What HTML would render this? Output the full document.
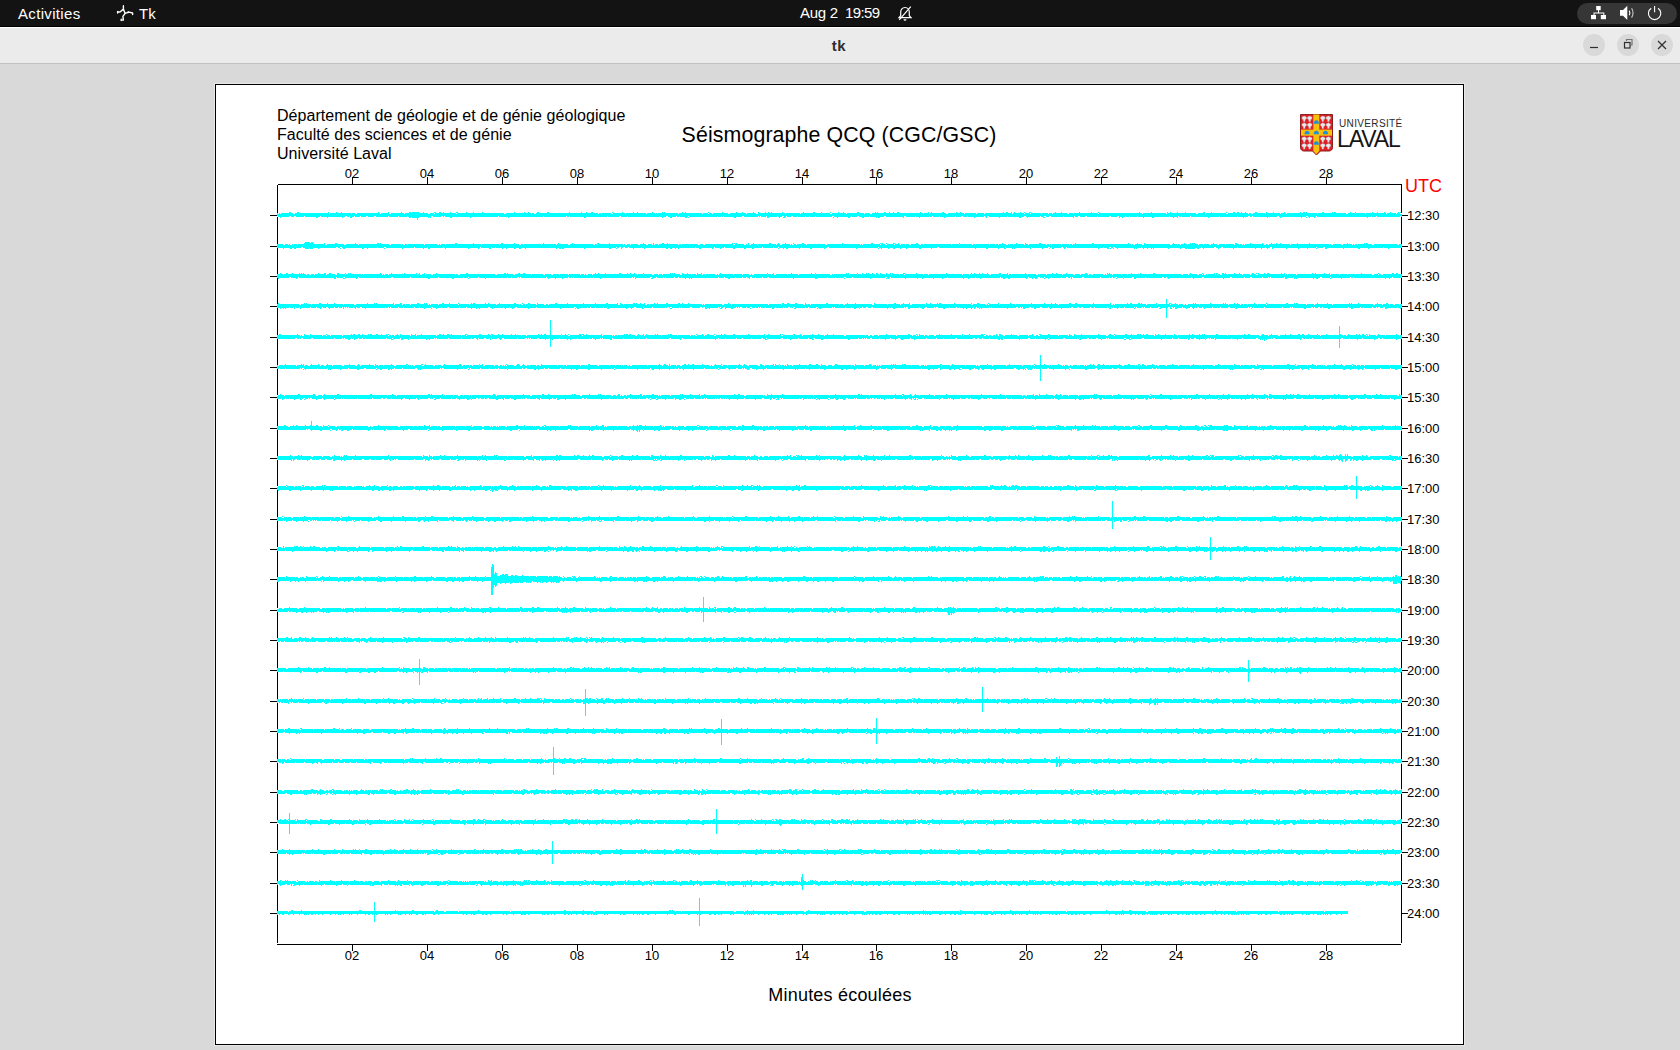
<!DOCTYPE html>
<html><head><meta charset="utf-8">
<style>
html,body{margin:0;padding:0;}
body{width:1680px;height:1050px;overflow:hidden;background:#d9d9d9;position:relative;font-family:"Liberation Sans",sans-serif;}
.abs{position:absolute;}
#topbar{position:absolute;left:0;top:0;width:1680px;height:26px;background:#131313;border-bottom:1px solid #000;}
#topbar .w{position:absolute;color:#fff;font-size:15px;white-space:nowrap;}
#hl{position:absolute;left:0;top:27px;width:1680px;height:1px;background:#fff;}
#titlebar{position:absolute;left:0;top:28px;width:1680px;height:35px;background:#ebebeb;border-bottom:1px solid #c0c0c0;}
.btn{position:absolute;top:34px;width:22px;height:22px;border-radius:50%;background:#d9d9d9;}
#canvas{position:absolute;left:214px;top:83px;width:1249px;height:961px;border:1px solid #e8e8e8;}
#cin{position:absolute;left:0;top:0;width:1247px;height:959px;border:1px solid #000;background:#fff;}
.t13{position:absolute;width:40px;text-align:center;font-size:13px;line-height:15px;color:#000;}
.r13{position:absolute;font-size:13px;line-height:15px;color:#000;}
.hdr{position:absolute;left:277px;font-size:16px;line-height:19px;color:#000;white-space:nowrap;letter-spacing:0.05px;}
svg{position:absolute;left:0;top:0;}
</style></head><body>
<div id="topbar">
  <div class="w" style="left:18px;top:5px;letter-spacing:0.33px;">Activities</div>
  <svg style="left:116px;top:5px" width="18" height="18" viewBox="0 0 18 18">
    <g stroke="#fff" stroke-width="1.4" fill="none" stroke-linejoin="round" stroke-linecap="round">
      <path d="M7.4 0.8V4.1L4.3 6.7 1.6 7.2M1.6 6.4v1.6M7.4 4.1L9.1 8.4 13.1 7.1 16.6 8v1.6M9.1 8.4L6.9 11.3 7.4 15.1H5.2M5.2 14.2v1.4M12.2 6.6v1"/>
    </g>
  </svg>
  <div class="w" style="left:139px;top:5px;">Tk</div>
  <div class="w" style="left:800px;top:4px;letter-spacing:-0.3px;">Aug 2</div><div class="w" style="left:845px;top:4px;letter-spacing:-0.6px;">19:59</div>
  <svg style="left:897px;top:5px" width="16" height="17" viewBox="0 0 16 17">
    <path d="M8 2.5c-2.6 0-4.3 2-4.3 4.6v3.6L2 12.6h12l-1.7-1.9V7.1C12.3 4.5 10.6 2.5 8 2.5z" fill="none" stroke="#fff" stroke-width="1.2"/>
    <path d="M6.5 14.2a1.5 1.5 0 0 0 3 0z" fill="#fff"/>
    <path d="M2.2 14.8L13.8 1.6" stroke="#fff" stroke-width="1.2"/>
  </svg>
  <div style="position:absolute;left:1577px;top:3px;width:100px;height:21px;border-radius:11px;background:#363636;"></div>
  <svg style="left:1589px;top:5px" width="80" height="18" viewBox="0 0 80 18">
    <g fill="#fff">
      <rect x="7.2" y="1" width="4.5" height="4.2"/>
      <rect x="2" y="10" width="5" height="4.2"/>
      <rect x="11.8" y="10" width="5.2" height="4.2"/>
      <path d="M9 5h1v2.6h5.3v2.4h-1v-1.4H5.5v1.4h-1V7.6H9z"/>
      <path d="M31 5h3l4.3-4.2v14.2L34 10.8h-3z"/>
    </g>
    <g fill="none" stroke="#fff" stroke-width="1.1">
      <path d="M40.2 5.6q1.4 2.3 0 4.6"/>
      <path d="M42.6 3.2q2.9 4.7 0 9.4" stroke-opacity="0.75"/>
      <path d="M65.6 1v6.2"/>
      <path d="M62.2 3.2a6.2 6.2 0 1 0 6.8 0"/>
    </g>
  </svg>
</div>
<div id="hl"></div>
<div id="titlebar">
  <div style="position:absolute;left:-1px;width:1680px;top:9px;text-align:center;font-size:15px;font-weight:bold;color:#2e2e2e;letter-spacing:0.6px;">tk</div>
</div>
<div class="btn" style="left:1583px;"></div>
<div class="btn" style="left:1617px;"></div>
<div class="btn" style="left:1651px;"></div>
<svg style="left:1580px;top:36px" width="100" height="20" viewBox="0 0 100 20">
  <g stroke="#2e2e2e" stroke-width="1.2" fill="none">
    <path d="M10 11.5h8"/>
    <rect x="44.5" y="6.5" width="5.5" height="5.5"/>
    <path d="M46.5 5V3.5h5.5V9h-1.5" stroke-opacity="0.6"/>
    <path d="M78 5l8 8M86 5l-8 8"/>
  </g>
</svg>
<div id="canvas"><div id="cin"></div></div>
<svg width="1680" height="1050" shape-rendering="crispEdges">
<path d="M277.5 184.5H1401.5M277.5 184.5V942.5M1401.5 184.5V942.5M277 944.5H1401" stroke="#000" stroke-width="1" fill="none"/><path d="M352.5 177V184M352.5 945V951M427.5 177V184M427.5 945V951M502.5 177V184M502.5 945V951M577.5 177V184M577.5 945V951M652.5 177V184M652.5 945V951M727.5 177V184M727.5 945V951M802.5 177V184M802.5 945V951M876.5 177V184M876.5 945V951M951.5 177V184M951.5 945V951M1026.5 177V184M1026.5 945V951M1101.5 177V184M1101.5 945V951M1176.5 177V184M1176.5 945V951M1251.5 177V184M1251.5 945V951M1326.5 177V184M1326.5 945V951M270 215.5H277M1402 215.5H1408M270 246.5H277M1402 246.5H1408M270 276.5H277M1402 276.5H1408M270 306.5H277M1402 306.5H1408M270 337.5H277M1402 337.5H1408M270 367.5H277M1402 367.5H1408M270 397.5H277M1402 397.5H1408M270 428.5H277M1402 428.5H1408M270 458.5H277M1402 458.5H1408M270 488.5H277M1402 488.5H1408M270 519.5H277M1402 519.5H1408M270 549.5H277M1402 549.5H1408M270 579.5H277M1402 579.5H1408M270 610.5H277M1402 610.5H1408M270 640.5H277M1402 640.5H1408M270 670.5H277M1402 670.5H1408M270 701.5H277M1402 701.5H1408M270 731.5H277M1402 731.5H1408M270 761.5H277M1402 761.5H1408M270 792.5H277M1402 792.5H1408M270 822.5H277M1402 822.5H1408M270 852.5H277M1402 852.5H1408M270 883.5H277M1402 883.5H1408M270 913.5H277M1402 913.5H1408" stroke="#000" stroke-width="1" fill="none"/>
<path fill="#0ff" d="M277 213h1125v4h-1125zM277 244h1125v4h-1125zM277 274h1125v4h-1125zM277 304h1125v4h-1125zM277 335h1125v4h-1125zM277 365h1125v4h-1125zM277 395h1125v4h-1125zM277 426h1125v4h-1125zM277 456h1125v4h-1125zM277 486h1125v4h-1125zM277 517h1125v4h-1125zM277 547h1125v4h-1125zM277 577h1125v4h-1125zM277 608h1125v4h-1125zM277 638h1125v4h-1125zM277 668h1125v4h-1125zM277 699h1125v4h-1125zM277 729h1125v4h-1125zM277 759h1125v4h-1125zM277 790h1125v4h-1125zM277 820h1125v4h-1125zM277 850h1125v4h-1125zM277 881h1125v4h-1125zM277 911h1071v3h-1071z"/><path stroke="#fff" fill="none" d="M278 213.5h1m1 0h1m12 0h2m34 0h1m21 0h1m3 0h2m23 0h1m8 0h2m13 0h1m4 0h2m17 0h2m4 0h1m21 0h1m47 0h2m25 0h1m2 0h2m62 0h1m2 0h1m9 0h2m12 0h1m20 0h1m8 0h1m1 0h1m20 0h1m23 0h1m5 0h1m3 0h1m15 0h2m16 0h1m9 0h2m27 0h1m14 0h1m20 0h1m8 0h2m14 0h1m17 0h1m5 0h2m51 0h1m5 0h1m16 0h2m16 0h1m11 0h1m7 0h1m27 0h1m11 0h1m5 0h1m10 0h1m6 0h1m3 0h1m14 0h2m4 0h1m24 0h1m43 0h1m23 0h1m29 0h2m7 0h1m20 0h2m20 0h1m2 0h2m12 0h1m14 0h1m5 0h1m30 0h1m28 0h2m7 0h1m9 0h1m20 0h1m9 0h1m3 0h2M277 216.5h1m11 0h2m3 0h2m8 0h1m15 0h1m24 0h2m2 0h1m4 0h1m5 0h1m5 0h2m6 0h2m12 0h1m9 0h1m8 0h2m2 0h1m3 0h1m15 0h2m8 0h2m1 0h1m53 0h1m44 0h1m22 0h1m2 0h1m37 0h1m11 0h2m6 0h1m31 0h1m6 0h2m8 0h1m2 0h1m8 0h1m28 0h1m3 0h1m1 0h1m18 0h2m14 0h1m1 0h1m5 0h1m10 0h1m4 0h2m2 0h1m4 0h2m4 0h1m7 0h1m3 0h1m5 0h1m16 0h2m17 0h1m5 0h2m10 0h1m14 0h2m18 0h2m9 0h1m13 0h1m2 0h1m6 0h1m15 0h1m5 0h2m4 0h1m16 0h1m2 0h2m18 0h1m16 0h2m14 0h1m3 0h2m3 0h2m12 0h1m10 0h1m3 0h2m5 0h2m10 0h1m11 0h2m6 0h2m6 0h1m3 0h1m7 0h1m31 0h1m8 0h1m2 0h1m8 0h1m28 0h1m17 0h1m10 0h2m2 0h1m24 0h2m27 0h2m8 0h1m54 0h1m4 0h1m23 0h1M283 244.5h2m3 0h1m1 0h2m1 0h1m3 0h1m9 0h1m2 0h1m14 0h2m17 0h2m12 0h1m30 0h2m10 0h1m1 0h2m2 0h1m16 0h1m12 0h2m1 0h1m4 0h1m35 0h1m17 0h1m19 0h2m2 0h1m17 0h1m14 0h1m11 0h2m23 0h2m2 0h1m25 0h1m1 0h2m3 0h1m7 0h2m6 0h2m4 0h1m1 0h1m3 0h1m19 0h1m2 0h1m16 0h2m3 0h2m28 0h2m9 0h2m1 0h1m1 0h2m6 0h1m18 0h1m3 0h2m8 0h1m1 0h2m2 0h1m9 0h1m18 0h2m33 0h1m1 0h1m17 0h1m4 0h2m7 0h1m5 0h1m4 0h1m3 0h2m8 0h2m2 0h1m27 0h1m7 0h1m12 0h1m2 0h1m13 0h1m5 0h1m2 0h1m7 0h2m1 0h1m3 0h1m10 0h1m3 0h1m17 0h1m2 0h1m1 0h1m9 0h1m7 0h1m2 0h1m58 0h1m1 0h2m7 0h2m26 0h2m5 0h1m2 0h1m6 0h1m10 0h1m4 0h1m5 0h2m6 0h2m6 0h1m8 0h1m4 0h1m2 0h1m1 0h1m19 0h2m2 0h1m21 0h1m38 0h1m1 0h2m8 0h2m9 0h1m1 0h1m2 0h1m14 0h2m23 0h2M301 247.5h2m33 0h2m2 0h2m35 0h1m6 0h2m28 0h1m12 0h1m15 0h1m36 0h1m10 0h1m3 0h1m120 0h1m2 0h2m2 0h2m3 0h1m12 0h1m53 0h1m18 0h1m9 0h1m37 0h1m10 0h1m4 0h1m22 0h1m25 0h2m49 0h1m58 0h2m66 0h1m25 0h1m16 0h2m1 0h1m9 0h2m3 0h1m36 0h1m5 0h2m2 0h2m26 0h1m59 0h1m12 0h2m5 0h2m14 0h1m27 0h1m4 0h2m44 0h1m6 0h2m58 0h1M283 274.5h1m22 0h1m2 0h2m3 0h1m11 0h1m8 0h2m8 0h1m15 0h1m1 0h1m18 0h1m1 0h1m3 0h1m28 0h1m2 0h2m3 0h1m5 0h2m22 0h1m2 0h2m35 0h2m16 0h2m16 0h1m11 0h2m6 0h2m6 0h1m8 0h1m11 0h1m3 0h1m1 0h2m4 0h1m44 0h1m5 0h1m8 0h2m4 0h1m3 0h1m17 0h2m9 0h1m4 0h1m5 0h1m2 0h1m9 0h2m1 0h1m14 0h1m8 0h1m6 0h2m1 0h2m13 0h1m3 0h1m2 0h2m11 0h1m10 0h1m16 0h1m14 0h2m1 0h1m15 0h1m7 0h1m3 0h1m13 0h1m3 0h1m5 0h1m5 0h1m7 0h1m4 0h1m18 0h1m4 0h1m33 0h1m6 0h1m1 0h1m17 0h2m10 0h1m6 0h1m2 0h1m15 0h1m8 0h2m1 0h1m6 0h1m15 0h1m10 0h2m5 0h1m7 0h1m2 0h2m10 0h2m1 0h1m5 0h1m8 0h1m5 0h1m53 0h2m5 0h1m8 0h2m3 0h1m1 0h2m1 0h1m7 0h1m1 0h1m2 0h2m5 0h1m14 0h1m7 0h1m5 0h2m27 0h1m1 0h1m8 0h1m33 0h1m8 0h1m7 0h1m24 0h2m4 0h1m2 0h2M289 277.5h2m7 0h1m37 0h1m6 0h2m13 0h1m32 0h2m17 0h1m27 0h1m24 0h1m4 0h1m9 0h1m6 0h1m21 0h1m3 0h1m5 0h2m1 0h1m25 0h1m21 0h1m2 0h1m1 0h1m19 0h1m38 0h1m1 0h1m15 0h2m4 0h1m6 0h1m1 0h1m8 0h1m3 0h1m2 0h1m36 0h1m5 0h1m10 0h1m6 0h1m3 0h1m3 0h2m3 0h1m6 0h1m4 0h2m58 0h1m7 0h1m8 0h2m6 0h1m32 0h2m3 0h1m56 0h1m27 0h1m24 0h1m27 0h1m9 0h2m1 0h1m2 0h1m6 0h1m9 0h1m4 0h2m2 0h1m1 0h1m9 0h2m16 0h1m8 0h1m2 0h1m2 0h2m6 0h1m8 0h2m11 0h1m16 0h2m2 0h1m24 0h1m10 0h2m26 0h2m12 0h1m5 0h2m10 0h1m5 0h1m1 0h1m13 0h1m8 0h1m26 0h2m8 0h1m19 0h1m2 0h1m38 0h1M299 304.5h2m10 0h1m31 0h1m10 0h2m38 0h1m7 0h1m2 0h1m4 0h1m17 0h1m1 0h1m7 0h1m19 0h1m10 0h1m26 0h1m22 0h1m1 0h2m2 0h1m10 0h1m7 0h2m2 0h1m69 0h2m3 0h1m21 0h2m2 0h1m52 0h1m1 0h1m17 0h2m7 0h1m36 0h1m12 0h1m21 0h2m2 0h1m2 0h1m28 0h1m3 0h2m27 0h2m13 0h1m12 0h1m9 0h2m13 0h1m45 0h2m12 0h2m1 0h1m10 0h1m15 0h1m42 0h1m32 0h1m19 0h2m1 0h1m31 0h1m10 0h1m12 0h1m7 0h1m4 0h2m1 0h2m11 0h1m28 0h1m11 0h1m2 0h1m3 0h1m9 0h1m8 0h1m39 0h1m7 0h1m17 0h1m40 0h2m7 0h1m6 0h1m3 0h2m4 0h1M289 307.5h1m3 0h1m1 0h1m3 0h1m10 0h1m5 0h1m5 0h1m3 0h2m6 0h1m3 0h1m3 0h1m1 0h1m1 0h1m1 0h1m4 0h1m2 0h1m3 0h2m23 0h1m2 0h1m1 0h1m7 0h1m4 0h1m10 0h1m4 0h1m11 0h2m8 0h1m5 0h2m10 0h1m6 0h1m21 0h2m13 0h1m5 0h1m5 0h2m19 0h1m37 0h2m11 0h1m2 0h1m4 0h1m7 0h1m3 0h1m21 0h1m4 0h2m7 0h1m8 0h1m12 0h1m1 0h2m1 0h2m7 0h1m1 0h1m8 0h2m8 0h2m1 0h2m13 0h1m1 0h1m2 0h2m11 0h1m1 0h1m1 0h2m4 0h1m3 0h2m3 0h1m2 0h1m1 0h1m4 0h1m5 0h1m3 0h1m7 0h1m1 0h1m2 0h2m1 0h1m1 0h2m10 0h1m2 0h1m7 0h2m14 0h1m1 0h1m10 0h1m5 0h1m7 0h1m2 0h1m3 0h2m3 0h2m16 0h1m1 0h1m12 0h1m1 0h2m11 0h1m5 0h2m7 0h1m1 0h2m11 0h1m6 0h1m2 0h1m13 0h1m2 0h1m2 0h1m9 0h1m1 0h1m24 0h2m2 0h1m1 0h1m6 0h2m2 0h1m6 0h2m6 0h1m20 0h1m1 0h2m4 0h2m2 0h2m7 0h1m3 0h1m12 0h1m1 0h1m1 0h1m1 0h1m5 0h1m4 0h1m9 0h1m1 0h1m5 0h1m1 0h1m5 0h1m7 0h2m8 0h2m1 0h2m1 0h1m7 0h1m7 0h2m3 0h1m1 0h2m3 0h1m9 0h1m4 0h1m2 0h1m7 0h2m5 0h1m12 0h1m1 0h2m1 0h1m10 0h1m17 0h1m7 0h1m1 0h1m18 0h2m1 0h1m3 0h2m2 0h1m25 0h1m11 0h1m2 0h1m8 0h1m3 0h1m1 0h2m3 0h2m12 0h1M300 335.5h1m1 0h2m5 0h1m12 0h1m3 0h1m3 0h1m11 0h1m45 0h1m2 0h1m2 0h1m4 0h1m10 0h1m5 0h1m19 0h1m24 0h1m4 0h1m24 0h1m29 0h1m4 0h1m34 0h1m6 0h2m12 0h1m19 0h1m9 0h1m1 0h1m2 0h1m17 0h2m4 0h1m2 0h1m16 0h1m15 0h1m12 0h1m2 0h1m1 0h2m7 0h1m9 0h2m49 0h1m15 0h2m10 0h1m8 0h1m21 0h1m19 0h2m19 0h1m2 0h2m2 0h2m4 0h1m17 0h1m15 0h1m3 0h1m1 0h1m5 0h1m2 0h2m5 0h2m25 0h1m1 0h1m5 0h1m14 0h2m2 0h1m2 0h2m2 0h1m2 0h1m4 0h2m12 0h2m9 0h1m5 0h2m2 0h2m18 0h1m9 0h1m3 0h2m32 0h2m6 0h1m39 0h1m18 0h1m3 0h1m49 0h1m31 0h2m7 0h1m9 0h2m25 0h1m11 0h1m2 0h1m22 0h1m2 0h1m14 0h1m4 0h1m1 0h1m7 0h1m8 0h1m13 0h1M295 338.5h2m2 0h1m1 0h2m8 0h2m21 0h1m7 0h1m1 0h1m6 0h1m1 0h1m4 0h1m3 0h1m2 0h1m20 0h1m5 0h1m7 0h1m8 0h1m24 0h1m1 0h1m11 0h1m12 0h1m9 0h1m2 0h2m2 0h1m5 0h2m3 0h1m1 0h1m5 0h2m3 0h2m13 0h1m7 0h2m1 0h1m1 0h1m6 0h2m10 0h1m9 0h1m17 0h1m11 0h1m2 0h1m7 0h1m1 0h1m9 0h1m10 0h1m9 0h1m5 0h1m6 0h1m22 0h2m11 0h1m35 0h1m6 0h1m10 0h1m5 0h1m8 0h1m9 0h2m3 0h1m14 0h2m4 0h1m10 0h1m9 0h1m4 0h2m43 0h1m3 0h1m1 0h1m1 0h1m3 0h2m7 0h1m10 0h1m7 0h2m10 0h1m15 0h1m9 0h1m6 0h1m11 0h2m16 0h2m2 0h2m3 0h1m6 0h1m13 0h1m24 0h2m5 0h1m12 0h1m14 0h2m12 0h1m1 0h1m7 0h2m2 0h1m4 0h2m3 0h1m4 0h1m1 0h1m15 0h2m4 0h1m11 0h2m21 0h1m6 0h1m5 0h1m8 0h1m2 0h1m3 0h2m9 0h1m1 0h2m1 0h1m3 0h1m16 0h1m10 0h1m13 0h2m13 0h1m1 0h2m27 0h1m2 0h1m3 0h1m2 0h1m8 0h1m19 0h2m6 0h1m12 0h1m15 0h2m2 0h1m10 0h1M278 365.5h1m4 0h1m12 0h1m7 0h1m3 0h2m10 0h1m3 0h2m6 0h1m9 0h2m11 0h2m3 0h1m13 0h1m3 0h1m4 0h1m10 0h2m11 0h1m1 0h1m1 0h1m1 0h2m7 0h2m9 0h2m2 0h1m3 0h2m19 0h1m2 0h1m3 0h1m2 0h1m6 0h1m3 0h2m9 0h1m3 0h2m2 0h1m1 0h1m1 0h1m7 0h2m4 0h2m3 0h2m2 0h1m6 0h1m2 0h2m16 0h1m5 0h1m2 0h1m13 0h1m4 0h1m1 0h1m9 0h2m10 0h1m5 0h1m5 0h1m1 0h1m3 0h2m1 0h2m15 0h1m9 0h1m4 0h1m5 0h1m1 0h1m5 0h1m3 0h2m27 0h2m1 0h2m7 0h2m4 0h1m9 0h1m4 0h1m4 0h2m9 0h2m4 0h1m4 0h1m4 0h1m4 0h1m1 0h1m2 0h1m1 0h1m2 0h1m2 0h1m14 0h1m12 0h1m5 0h2m4 0h2m17 0h1m2 0h1m9 0h1m7 0h1m3 0h1m1 0h1m1 0h1m30 0h1m7 0h2m3 0h1m1 0h1m14 0h1m8 0h1m14 0h1m10 0h1m1 0h2m7 0h1m4 0h1m13 0h1m15 0h1m8 0h1m2 0h1m14 0h1m1 0h1m10 0h1m1 0h1m3 0h2m1 0h2m4 0h1m1 0h1m4 0h1m1 0h1m8 0h2m8 0h1m3 0h1m12 0h2m11 0h1m1 0h1m1 0h1m1 0h1m4 0h1m8 0h1m1 0h2m6 0h2m11 0h1m11 0h1m8 0h1m1 0h1m11 0h2m6 0h1m11 0h1m6 0h1m2 0h1m5 0h1m5 0h2m15 0h1m22 0h2m10 0h1m8 0h1m4 0h1m1 0h1m1 0h2m4 0h1m11 0h2m7 0h1m3 0h1m3 0h1m3 0h1m24 0h1M279 368.5h1m5 0h1m14 0h1m1 0h2m13 0h1m9 0h1m20 0h1m15 0h2m10 0h1m10 0h1m6 0h1m7 0h1m12 0h2m23 0h1m1 0h2m19 0h1m3 0h2m1 0h1m9 0h1m8 0h1m5 0h1m2 0h1m8 0h1m14 0h1m2 0h2m17 0h1m3 0h1m11 0h1m4 0h1m45 0h1m2 0h1m12 0h1m22 0h1m24 0h1m2 0h1m2 0h1m22 0h1m10 0h1m2 0h1m7 0h2m8 0h2m4 0h1m1 0h1m5 0h2m14 0h1m38 0h1m13 0h1m37 0h1m21 0h2m5 0h1m6 0h2m26 0h1m16 0h2m20 0h2m12 0h1m5 0h1m33 0h2m9 0h2m6 0h1m1 0h1m5 0h1m5 0h2m20 0h2m24 0h2m4 0h1m10 0h1m4 0h2m33 0h1m3 0h1m2 0h1m25 0h1m21 0h1m19 0h1m24 0h2m5 0h2m39 0h1m8 0h2m53 0h1m15 0h1m9 0h1M277 395.5h1m6 0h1m31 0h2m4 0h1m64 0h1m8 0h1m46 0h1m1 0h1m7 0h1m4 0h2m3 0h1m5 0h1m1 0h1m19 0h1m4 0h1m16 0h1m16 0h2m9 0h1m38 0h2m23 0h1m5 0h2m3 0h1m3 0h1m1 0h2m2 0h1m15 0h1m2 0h1m12 0h1m1 0h1m9 0h1m29 0h1m43 0h2m17 0h1m1 0h2m46 0h1m15 0h1m39 0h1m32 0h1m9 0h2m5 0h1m14 0h1m70 0h1m16 0h1m2 0h2m7 0h1m3 0h1m14 0h2m7 0h1m5 0h1m9 0h1m26 0h1m6 0h1m36 0h2m26 0h1m9 0h1m27 0h1m52 0h1m38 0h1m40 0h1m22 0h1m15 0h1m9 0h2M281 398.5h1m3 0h1m3 0h1m9 0h1m1 0h1m1 0h2m3 0h1m1 0h2m10 0h1m11 0h1m6 0h1m1 0h1m13 0h1m14 0h1m8 0h2m2 0h2m4 0h1m11 0h2m11 0h1m2 0h1m8 0h2m1 0h1m1 0h2m5 0h1m10 0h1m4 0h1m8 0h1m5 0h1m4 0h2m1 0h2m3 0h1m2 0h2m12 0h1m2 0h1m5 0h1m10 0h1m1 0h1m1 0h2m2 0h1m6 0h1m3 0h1m11 0h1m3 0h1m25 0h2m2 0h1m22 0h1m7 0h1m6 0h1m3 0h2m1 0h1m5 0h1m1 0h1m6 0h2m1 0h2m5 0h1m4 0h1m5 0h1m6 0h1m9 0h2m3 0h1m4 0h1m6 0h1m2 0h1m1 0h1m8 0h1m1 0h1m2 0h1m2 0h1m1 0h1m1 0h1m16 0h1m17 0h2m5 0h1m2 0h1m2 0h2m2 0h2m1 0h1m16 0h1m2 0h1m4 0h1m3 0h1m1 0h1m2 0h1m11 0h2m4 0h1m4 0h1m6 0h2m1 0h1m4 0h1m1 0h1m9 0h1m3 0h1m1 0h2m1 0h2m3 0h1m4 0h1m1 0h1m1 0h1m3 0h2m8 0h1m4 0h1m3 0h1m1 0h1m1 0h2m4 0h2m1 0h1m13 0h1m1 0h2m5 0h1m1 0h1m9 0h1m5 0h2m2 0h1m10 0h2m4 0h2m1 0h2m5 0h1m8 0h1m4 0h1m12 0h1m2 0h1m3 0h1m19 0h1m2 0h1m22 0h1m12 0h1m1 0h1m4 0h2m3 0h1m10 0h1m8 0h1m2 0h1m10 0h1m7 0h1m3 0h1m3 0h1m1 0h1m10 0h1m1 0h1m14 0h2m1 0h1m2 0h1m1 0h1m6 0h1m2 0h2m3 0h1m3 0h1m1 0h1m6 0h1m2 0h1m8 0h1m4 0h1m3 0h1m10 0h1m3 0h2m1 0h2m6 0h2m1 0h1m3 0h1m14 0h1m6 0h2m5 0h2m11 0h1m6 0h1m8 0h1m2 0h1m3 0h1m1 0h1m8 0h2m6 0h2m1 0h1m5 0h2m5 0h2m16 0h1M288 426.5h2m29 0h1m2 0h1m5 0h1m6 0h2m2 0h1m13 0h1m14 0h2m1 0h2m25 0h2m13 0h1m3 0h1m5 0h1m6 0h1m6 0h1m2 0h2m13 0h1m9 0h1m5 0h2m9 0h2m6 0h1m1 0h1m3 0h1m1 0h1m6 0h2m18 0h1m7 0h1m1 0h1m4 0h2m2 0h1m4 0h1m9 0h1m18 0h1m11 0h1m6 0h1m1 0h1m4 0h1m1 0h1m10 0h1m9 0h2m2 0h1m7 0h1m13 0h1m8 0h1m1 0h1m6 0h1m2 0h1m1 0h2m6 0h2m11 0h2m4 0h1m4 0h1m9 0h1m7 0h1m9 0h2m3 0h1m15 0h1m1 0h1m2 0h1m2 0h1m2 0h1m5 0h1m21 0h1m11 0h1m10 0h1m6 0h1m3 0h1m24 0h2m20 0h1m3 0h1m28 0h2m10 0h2m7 0h2m5 0h2m5 0h1m5 0h2m29 0h2m9 0h1m7 0h1m4 0h1m1 0h2m7 0h1m14 0h1m1 0h2m9 0h2m9 0h1m7 0h2m7 0h1m26 0h1m7 0h1m15 0h1m5 0h2m6 0h1m3 0h1m8 0h1m26 0h1m6 0h1m13 0h2m2 0h2m2 0h2m23 0h2m14 0h1m8 0h2m1 0h1m2 0h1m1 0h2m10 0h1m1 0h1m1 0h1m3 0h1m7 0h1m14 0h1m12 0h1m5 0h1m4 0h1m1 0h2m11 0h2m1 0h1m6 0h2m8 0h1m23 0h1m9 0h1M306 429.5h1m1 0h2m20 0h2m6 0h1m2 0h1m10 0h1m18 0h1m1 0h1m12 0h1m14 0h1m6 0h2m17 0h2m24 0h1m28 0h2m7 0h1m13 0h1m12 0h2m17 0h2m29 0h2m7 0h1m17 0h1m3 0h1m30 0h1m10 0h1m1 0h1m26 0h2m11 0h1m13 0h1m1 0h1m6 0h1m2 0h1m11 0h1m8 0h2m7 0h1m13 0h1m5 0h1m13 0h1m2 0h1m21 0h1m5 0h1m4 0h1m37 0h1m8 0h1m15 0h2m8 0h1m16 0h1m6 0h1m23 0h1m11 0h1m12 0h1m21 0h1m15 0h1m17 0h2m23 0h1m16 0h1m18 0h1m1 0h1m1 0h1m10 0h1m33 0h1m10 0h1m1 0h1m6 0h1m8 0h1m14 0h2m34 0h1m13 0h1m22 0h2m31 0h1m2 0h2m5 0h1m9 0h1m38 0h1m32 0h1m4 0h2m3 0h1m3 0h1m6 0h1M293 456.5h1m17 0h2m9 0h1m7 0h2m1 0h1m6 0h1m1 0h1m46 0h1m32 0h1m5 0h1m3 0h1m20 0h1m23 0h1m5 0h1m13 0h1m9 0h1m16 0h2m6 0h1m54 0h1m14 0h2m6 0h1m7 0h1m31 0h1m8 0h1m9 0h1m34 0h1m5 0h2m2 0h1m31 0h1m3 0h1m7 0h2m2 0h2m4 0h1m12 0h1m9 0h2m3 0h1m22 0h1m21 0h2m19 0h2m15 0h1m5 0h1m27 0h1m7 0h1m19 0h1m2 0h2m1 0h2m1 0h1m5 0h2m11 0h2m20 0h2m14 0h1m9 0h1m7 0h1m29 0h1m2 0h1m4 0h1m23 0h1m3 0h1m6 0h1m18 0h2m26 0h1m4 0h2m26 0h1m22 0h1m5 0h1m2 0h1m3 0h1m24 0h2m3 0h1m27 0h1m20 0h1m5 0h1m10 0h1m6 0h1m2 0h2m29 0h2m8 0h1m6 0h2m19 0h1m8 0h1M277 459.5h1m14 0h1m2 0h2m4 0h1m8 0h2m3 0h1m3 0h2m4 0h2m5 0h1m19 0h1m9 0h2m5 0h2m4 0h1m6 0h2m4 0h1m2 0h1m2 0h1m1 0h2m16 0h1m8 0h2m5 0h1m1 0h1m6 0h2m9 0h1m5 0h2m3 0h1m2 0h1m14 0h1m1 0h1m5 0h1m17 0h1m7 0h1m12 0h2m6 0h2m4 0h1m12 0h1m24 0h2m11 0h1m12 0h1m3 0h1m9 0h1m22 0h1m12 0h1m1 0h1m3 0h1m20 0h1m1 0h1m1 0h1m7 0h1m2 0h2m5 0h1m2 0h1m2 0h2m9 0h1m27 0h1m9 0h1m20 0h2m1 0h1m5 0h2m16 0h2m7 0h1m5 0h1m1 0h1m1 0h2m1 0h2m2 0h1m2 0h2m12 0h2m2 0h1m5 0h1m16 0h1m4 0h1m9 0h1m3 0h2m14 0h1m1 0h2m15 0h2m9 0h2m3 0h1m1 0h1m1 0h2m23 0h1m3 0h2m8 0h2m2 0h2m3 0h1m7 0h2m1 0h2m4 0h2m8 0h1m29 0h1m12 0h1m3 0h2m12 0h1m9 0h1m13 0h2m1 0h1m3 0h1m21 0h1m11 0h2m1 0h2m2 0h1m2 0h1m1 0h2m1 0h1m2 0h1m1 0h1m3 0h1m8 0h1m17 0h1m8 0h1m11 0h2m9 0h1m8 0h1m6 0h1m4 0h2m1 0h1m2 0h1m5 0h1m1 0h2m4 0h2m1 0h2m7 0h2m1 0h2m1 0h1m4 0h2m1 0h1m3 0h1m5 0h1m17 0h1m6 0h2m1 0h1m3 0h2m3 0h2m2 0h1m6 0h1m11 0h2m7 0h2m3 0h1m8 0h1M277 486.5h1m8 0h1m7 0h1m2 0h1m3 0h2m1 0h1m5 0h1m3 0h2m7 0h1m1 0h1m12 0h1m7 0h1m5 0h2m1 0h1m6 0h1m1 0h2m5 0h1m3 0h1m3 0h2m6 0h2m2 0h2m5 0h2m2 0h1m2 0h1m8 0h1m4 0h1m21 0h1m8 0h2m1 0h1m2 0h1m3 0h1m5 0h1m1 0h2m12 0h1m8 0h1m1 0h1m3 0h1m9 0h2m7 0h1m2 0h1m11 0h1m8 0h2m4 0h1m1 0h1m17 0h1m11 0h1m8 0h1m2 0h1m7 0h1m15 0h1m1 0h1m14 0h1m5 0h1m3 0h2m8 0h2m8 0h1m11 0h1m19 0h2m8 0h1m3 0h1m8 0h2m4 0h1m14 0h1m14 0h1m8 0h2m28 0h1m8 0h1m40 0h1m2 0h1m5 0h1m6 0h1m11 0h1m16 0h1m9 0h1m4 0h1m11 0h1m2 0h1m1 0h1m11 0h1m7 0h1m4 0h1m5 0h1m14 0h1m1 0h1m3 0h1m4 0h1m12 0h2m9 0h1m7 0h2m1 0h1m9 0h1m5 0h1m12 0h2m3 0h1m3 0h2m2 0h2m3 0h1m4 0h1m11 0h1m2 0h2m16 0h1m8 0h1m14 0h1m3 0h1m2 0h2m10 0h2m22 0h1m9 0h1m23 0h1m5 0h1m2 0h1m3 0h2m5 0h1m9 0h1m1 0h2m5 0h1m1 0h1m4 0h1m5 0h2m1 0h2m1 0h1m7 0h1m7 0h1m13 0h1m3 0h1m26 0h1m6 0h2m24 0h1m13 0h2m1 0h1m4 0h1m2 0h2m5 0h2m9 0h2M413 489.5h2m13 0h1m61 0h1m6 0h1m1 0h2m60 0h2m9 0h1m16 0h1m13 0h1m30 0h1m30 0h2m7 0h1m61 0h2m3 0h1m13 0h1m15 0h2m28 0h1m38 0h1m7 0h1m5 0h1m7 0h2m37 0h2m4 0h1m3 0h1m46 0h1m14 0h1m18 0h2m7 0h1m14 0h1m65 0h1m11 0h1m10 0h1m10 0h1m49 0h1m6 0h1m13 0h1m6 0h1m12 0h1m63 0h1m7 0h1m5 0h2m15 0h1m3 0h1m8 0h1m32 0h2M282 517.5h2m3 0h1m3 0h2m6 0h1m11 0h1m7 0h1m14 0h1m5 0h2m30 0h2m1 0h1m25 0h1m11 0h1m2 0h1m8 0h1m22 0h1m12 0h2m21 0h2m14 0h1m18 0h1m2 0h1m25 0h2m8 0h1m11 0h1m1 0h1m4 0h2m1 0h2m13 0h1m13 0h1m19 0h1m15 0h1m3 0h1m4 0h1m6 0h2m21 0h1m10 0h2m26 0h1m1 0h1m6 0h1m25 0h1m16 0h1m14 0h1m12 0h1m6 0h1m22 0h2m8 0h2m16 0h2m15 0h2m7 0h2m1 0h1m10 0h2m17 0h1m34 0h1m11 0h1m16 0h1m2 0h1m3 0h1m2 0h1m23 0h1m5 0h2m6 0h2m12 0h1m1 0h1m13 0h1m19 0h1m1 0h1m14 0h1m10 0h1m6 0h1m3 0h1m9 0h1m7 0h1m24 0h1m3 0h1m16 0h1m4 0h2m13 0h2m1 0h1m2 0h1m1 0h1m22 0h1m36 0h1m5 0h1m31 0h2m14 0h2m4 0h1m20 0h1m2 0h1m7 0h2m4 0h1m13 0h1m5 0h2M283 520.5h1m1 0h1m6 0h1m15 0h2m2 0h1m1 0h1m1 0h1m4 0h1m8 0h1m9 0h1m11 0h1m1 0h1m5 0h1m15 0h2m39 0h1m3 0h2m6 0h1m8 0h1m10 0h2m3 0h2m5 0h1m2 0h1m3 0h1m3 0h1m11 0h1m6 0h1m12 0h1m3 0h1m12 0h1m3 0h1m11 0h2m6 0h1m7 0h2m2 0h1m23 0h2m4 0h1m1 0h2m5 0h1m2 0h2m1 0h2m10 0h1m10 0h1m9 0h2m4 0h2m5 0h1m6 0h1m37 0h1m15 0h1m4 0h1m25 0h1m14 0h1m5 0h1m12 0h1m40 0h2m19 0h1m4 0h1m22 0h1m1 0h2m1 0h1m5 0h1m1 0h2m1 0h1m5 0h2m3 0h1m5 0h1m2 0h1m1 0h1m11 0h1m7 0h1m23 0h2m24 0h1m8 0h2m29 0h1m2 0h1m4 0h1m4 0h2m4 0h1m7 0h1m10 0h1m5 0h2m3 0h2m9 0h1m1 0h1m12 0h1m13 0h1m3 0h2m6 0h1m5 0h1m2 0h1m4 0h2m5 0h1m1 0h1m10 0h2m25 0h1m5 0h2m22 0h1m6 0h1m1 0h2m18 0h1m5 0h2m6 0h1m8 0h1m2 0h1m25 0h1m3 0h1m12 0h1m8 0h1m12 0h1m1 0h1m26 0h1m21 0h1m4 0h1M277 547.5h1m3 0h2m1 0h1m18 0h1m16 0h2m1 0h1m2 0h2m9 0h1m9 0h1m8 0h2m12 0h1m13 0h1m9 0h1m2 0h1m1 0h1m13 0h1m16 0h1m7 0h1m6 0h1m10 0h1m3 0h2m1 0h2m2 0h1m3 0h1m1 0h1m10 0h1m7 0h2m2 0h2m19 0h1m13 0h1m5 0h1m16 0h1m1 0h1m6 0h1m12 0h1m11 0h1m24 0h1m3 0h2m4 0h1m3 0h1m7 0h1m2 0h1m2 0h1m11 0h1m7 0h1m4 0h1m8 0h2m1 0h2m9 0h1m9 0h1m1 0h1m8 0h1m1 0h1m1 0h1m5 0h1m1 0h1m27 0h1m8 0h1m10 0h1m7 0h2m1 0h1m9 0h1m2 0h2m1 0h2m8 0h1m4 0h2m1 0h1m9 0h1m3 0h1m17 0h1m1 0h2m12 0h2m1 0h2m5 0h1m2 0h1m15 0h1m6 0h1m10 0h1m14 0h1m2 0h1m7 0h1m4 0h1m27 0h1m1 0h2m19 0h1m13 0h1m1 0h1m17 0h2m2 0h1m17 0h1m1 0h1m13 0h2m2 0h1m10 0h1m11 0h1m13 0h1m2 0h2m17 0h1m22 0h2m1 0h1m6 0h1m5 0h2m1 0h1m16 0h2m1 0h1m1 0h1m3 0h1m12 0h1m7 0h2m9 0h1m2 0h1m10 0h1m7 0h1m15 0h2m8 0h1m1 0h2m11 0h1m2 0h2m4 0h1m11 0h1m3 0h1m19 0h1m6 0h2m6 0h1m7 0h1m8 0h1m2 0h2m2 0h2m10 0h1m11 0h1m2 0h1M285 550.5h1m50 0h1m2 0h1m8 0h1m21 0h2m23 0h1m15 0h2m17 0h2m3 0h1m8 0h1m15 0h1m3 0h1m10 0h1m18 0h1m13 0h1m2 0h1m11 0h1m1 0h1m17 0h1m4 0h2m1 0h2m1 0h2m6 0h1m13 0h1m19 0h2m7 0h2m27 0h1m4 0h2m6 0h1m15 0h1m14 0h1m38 0h2m1 0h2m12 0h2m15 0h1m1 0h1m25 0h1m19 0h1m32 0h2m13 0h2m10 0h1m17 0h2m19 0h1m60 0h2m8 0h1m50 0h1m31 0h1m4 0h1m8 0h2m16 0h1m18 0h1m23 0h2m11 0h1m1 0h1m56 0h1m15 0h1m27 0h1m1 0h1m22 0h1m3 0h1m24 0h1m2 0h1m3 0h1m16 0h1m59 0h1m9 0h1M285 577.5h1m9 0h1m2 0h2m1 0h1m2 0h2m10 0h1m1 0h2m5 0h1m3 0h1m8 0h1m2 0h1m12 0h1m6 0h2m6 0h1m5 0h1m2 0h1m7 0h1m8 0h1m7 0h1m5 0h1m13 0h1m10 0h2m9 0h2m6 0h1m2 0h1m3 0h1m18 0h1m5 0h1m5 0h2m12 0h2m4 0h1m2 0h2m10 0h1m6 0h1m5 0h1m1 0h2m8 0h2m2 0h1m6 0h2m1 0h2m4 0h2m3 0h2m1 0h1m16 0h1m1 0h1m1 0h1m6 0h2m2 0h1m5 0h2m5 0h1m1 0h1m2 0h1m2 0h1m3 0h1m13 0h2m8 0h1m5 0h2m1 0h1m3 0h2m10 0h1m10 0h1m1 0h1m1 0h1m2 0h2m4 0h2m3 0h1m5 0h1m8 0h1m2 0h1m4 0h1m9 0h2m2 0h1m1 0h1m4 0h1m2 0h1m5 0h1m2 0h1m2 0h1m8 0h2m25 0h1m2 0h1m25 0h1m15 0h1m8 0h2m10 0h1m16 0h2m3 0h1m4 0h1m9 0h1m25 0h2m1 0h1m22 0h2m6 0h1m6 0h1m1 0h1m3 0h1m2 0h1m4 0h1m2 0h2m4 0h1m1 0h1m1 0h2m11 0h2m5 0h1m4 0h2m2 0h1m8 0h1m3 0h1m3 0h1m4 0h1m2 0h2m29 0h2m4 0h1m4 0h2m16 0h1m2 0h1m6 0h1m5 0h1m6 0h1m2 0h1m3 0h1m2 0h1m3 0h1m4 0h1m1 0h1m9 0h1m3 0h1m3 0h1m5 0h1m2 0h1m2 0h1m9 0h1m1 0h1m3 0h1m2 0h1m5 0h1m3 0h1m1 0h1m7 0h1m6 0h1m1 0h1m5 0h1m21 0h1m1 0h1m11 0h2m2 0h1m2 0h2m9 0h1m12 0h1m12 0h2m1 0h1m3 0h1m5 0h1m10 0h1m7 0h2m8 0h1m6 0h1m4 0h1m6 0h1m1 0h1m1 0h1m3 0h1m3 0h1M289 580.5h1m27 0h1m3 0h2m28 0h2m8 0h2m69 0h1m37 0h1m41 0h1m44 0h1m3 0h1m3 0h1m51 0h1m75 0h1m54 0h1m116 0h1m13 0h2m19 0h1m67 0h1m66 0h1m14 0h2m55 0h1m1 0h1m6 0h2m41 0h1m25 0h1m47 0h2m11 0h2m16 0h1m24 0h1m44 0h2m9 0h1m1 0h1m12 0h1m12 0h1m13 0h1m10 0h2M277 608.5h2m3 0h2m13 0h2m21 0h2m3 0h1m15 0h2m1 0h1m8 0h2m4 0h1m26 0h1m4 0h1m7 0h2m6 0h1m1 0h1m5 0h1m6 0h1m2 0h1m29 0h1m2 0h1m10 0h2m4 0h1m3 0h2m8 0h1m16 0h1m12 0h1m3 0h1m29 0h1m6 0h1m7 0h1m14 0h2m4 0h1m1 0h1m5 0h2m3 0h1m1 0h2m1 0h1m8 0h1m24 0h1m8 0h1m7 0h2m2 0h1m5 0h1m2 0h1m1 0h2m3 0h1m4 0h1m9 0h1m14 0h1m2 0h1m2 0h1m1 0h1m15 0h1m7 0h1m2 0h1m1 0h2m7 0h1m12 0h1m1 0h1m13 0h1m6 0h1m3 0h1m8 0h1m8 0h1m15 0h1m8 0h1m7 0h1m19 0h1m6 0h1m1 0h1m19 0h1m8 0h2m5 0h2m21 0h1m8 0h2m12 0h1m4 0h1m15 0h2m21 0h1m15 0h1m2 0h1m4 0h1m9 0h2m7 0h2m6 0h1m26 0h1m8 0h2m6 0h1m7 0h2m3 0h2m1 0h2m8 0h1m1 0h1m8 0h2m4 0h2m1 0h1m4 0h2m1 0h1m4 0h1m5 0h1m10 0h1m46 0h1m16 0h2m3 0h1m2 0h1m5 0h1m8 0h1m1 0h1m2 0h1m6 0h1m3 0h2m12 0h1m6 0h1m15 0h1m3 0h1m12 0h1m1 0h1m4 0h1m3 0h2m2 0h1m2 0h2m5 0h1m9 0h1m17 0h1m3 0h1m8 0h2m1 0h1m2 0h1M288 611.5h1m2 0h1m25 0h2m22 0h1m12 0h1m4 0h1m9 0h1m20 0h2m9 0h2m45 0h1m12 0h1m2 0h2m54 0h1m7 0h1m2 0h1m12 0h2m1 0h1m10 0h1m12 0h1m8 0h1m7 0h1m2 0h1m5 0h2m16 0h1m3 0h1m2 0h1m7 0h1m13 0h1m8 0h2m6 0h1m9 0h1m8 0h1m9 0h2m2 0h1m5 0h1m15 0h1m5 0h1m11 0h2m9 0h2m10 0h1m29 0h1m11 0h1m10 0h1m20 0h2m3 0h1m1 0h1m6 0h2m16 0h1m9 0h2m4 0h1m11 0h1m1 0h1m32 0h1m5 0h2m3 0h1m16 0h2m21 0h1m20 0h1m3 0h1m7 0h2m11 0h1m66 0h1m11 0h1m19 0h1m38 0h1m14 0h1m17 0h1m37 0h2m8 0h2m32 0h1m40 0h1m52 0h1m20 0h1m5 0h1m3 0h1M292 638.5h2m3 0h1m11 0h2m28 0h1m7 0h1m4 0h2m6 0h1m5 0h2m9 0h1m24 0h2m3 0h1m35 0h1m5 0h1m5 0h1m8 0h2m1 0h1m4 0h2m20 0h1m38 0h2m34 0h2m15 0h1m1 0h2m10 0h1m19 0h1m10 0h1m24 0h2m3 0h2m20 0h2m7 0h1m19 0h1m1 0h2m22 0h1m14 0h2m7 0h1m4 0h1m1 0h2m1 0h1m3 0h2m11 0h1m31 0h1m1 0h2m27 0h1m1 0h2m40 0h2m3 0h2m42 0h2m23 0h1m12 0h2m9 0h1m15 0h1m1 0h1m4 0h2m39 0h1m2 0h1m16 0h1m11 0h1m6 0h1m31 0h1m23 0h1m45 0h1m10 0h2m1 0h2m3 0h1m6 0h2m28 0h1m5 0h1m13 0h1m17 0h2m3 0h2m25 0h1m6 0h1m11 0h2m15 0h1m4 0h1m29 0h2M277 641.5h1m2 0h1m3 0h1m13 0h1m1 0h1m2 0h2m4 0h1m1 0h1m4 0h2m7 0h2m6 0h1m1 0h1m4 0h1m6 0h1m6 0h2m4 0h1m1 0h2m4 0h1m7 0h1m16 0h1m9 0h1m1 0h1m5 0h1m1 0h2m4 0h1m9 0h2m2 0h1m7 0h1m3 0h2m3 0h1m2 0h1m5 0h2m1 0h2m3 0h1m14 0h1m2 0h1m2 0h1m2 0h1m5 0h1m16 0h1m3 0h1m6 0h1m12 0h2m16 0h1m3 0h1m1 0h1m2 0h1m2 0h1m4 0h1m8 0h2m4 0h1m4 0h2m8 0h1m2 0h2m8 0h2m2 0h2m9 0h2m24 0h2m2 0h1m3 0h2m10 0h1m7 0h1m2 0h1m8 0h1m2 0h1m7 0h2m5 0h1m6 0h2m6 0h1m9 0h1m5 0h2m1 0h1m10 0h2m3 0h1m7 0h1m1 0h1m3 0h1m3 0h1m1 0h1m3 0h2m2 0h2m5 0h2m7 0h1m2 0h1m12 0h1m8 0h1m1 0h1m2 0h1m6 0h2m6 0h2m7 0h1m4 0h1m2 0h1m5 0h1m6 0h2m5 0h1m4 0h2m26 0h1m2 0h1m10 0h1m8 0h1m1 0h2m11 0h2m1 0h1m1 0h1m1 0h2m4 0h1m14 0h2m4 0h1m11 0h1m1 0h1m1 0h2m3 0h1m4 0h1m4 0h2m1 0h2m2 0h1m4 0h1m10 0h1m6 0h2m2 0h2m5 0h1m3 0h1m13 0h1m2 0h1m5 0h1m7 0h1m14 0h1m4 0h1m2 0h1m1 0h1m1 0h1m1 0h1m5 0h1m1 0h1m2 0h1m6 0h1m13 0h2m5 0h2m3 0h1m2 0h1m6 0h1m2 0h1m1 0h1m3 0h1m3 0h2m17 0h2m1 0h2m2 0h2m6 0h2m6 0h1m10 0h2m6 0h1m1 0h2m2 0h1m3 0h1m4 0h1m10 0h2m8 0h1m2 0h1m4 0h1m28 0h2m3 0h1m8 0h1m4 0h1m2 0h2m3 0h2m2 0h2m1 0h1m10 0h1m12 0h1m1 0h1m1 0h1M286 668.5h2m24 0h1m6 0h1m21 0h1m4 0h1m19 0h1m32 0h2m1 0h1m7 0h2m9 0h2m5 0h1m5 0h1m2 0h1m9 0h1m3 0h1m9 0h1m3 0h1m2 0h1m1 0h1m24 0h2m4 0h1m8 0h1m6 0h1m6 0h1m2 0h2m2 0h1m2 0h1m22 0h1m4 0h2m1 0h2m4 0h1m8 0h2m7 0h1m5 0h1m6 0h2m6 0h1m4 0h1m7 0h1m5 0h2m8 0h1m10 0h1m1 0h1m7 0h1m17 0h1m28 0h1m2 0h2m15 0h1m2 0h1m1 0h1m12 0h2m7 0h1m1 0h1m22 0h2m3 0h1m11 0h1m4 0h1m9 0h1m40 0h1m3 0h1m2 0h2m19 0h2m8 0h2m4 0h1m8 0h2m10 0h1m10 0h1m11 0h2m2 0h1m14 0h2m5 0h1m7 0h1m21 0h2m9 0h1m39 0h1m2 0h1m16 0h1m5 0h1m1 0h1m2 0h1m3 0h1m22 0h1m9 0h1m16 0h2m10 0h1m31 0h1m3 0h2m2 0h2m4 0h1m9 0h2m1 0h2m30 0h1m5 0h1m4 0h2m2 0h1m10 0h1m6 0h1m4 0h2m3 0h2m4 0h1m2 0h1m1 0h1m2 0h1m2 0h1m21 0h1m25 0h1m15 0h2m4 0h1m14 0h2m4 0h1m2 0h1m8 0h1M283 671.5h1m18 0h1m19 0h1m36 0h1m18 0h1m18 0h2m2 0h1m11 0h2m6 0h1m6 0h1m19 0h1m4 0h1m5 0h1m15 0h1m2 0h1m29 0h1m1 0h1m45 0h1m70 0h2m66 0h1m16 0h1m14 0h1m35 0h1m21 0h1m9 0h2m13 0h1m9 0h2m76 0h1m4 0h1m39 0h2m10 0h2m3 0h1m16 0h1m61 0h1m8 0h1m17 0h1m8 0h1m2 0h1m73 0h1m30 0h2m27 0h1m11 0h2m3 0h1m49 0h1m29 0h1m25 0h1m33 0h1m3 0h1M279 699.5h1m1 0h1m6 0h1m4 0h1m1 0h1m1 0h1m5 0h2m4 0h1m6 0h1m7 0h1m5 0h1m2 0h1m13 0h1m3 0h1m13 0h1m4 0h1m10 0h1m1 0h1m9 0h1m4 0h1m1 0h2m9 0h2m14 0h1m1 0h1m5 0h1m4 0h2m3 0h1m1 0h2m1 0h2m5 0h2m4 0h1m4 0h1m4 0h1m2 0h1m2 0h1m2 0h1m5 0h1m12 0h2m17 0h1m19 0h1m1 0h2m10 0h1m2 0h1m2 0h2m2 0h1m5 0h1m3 0h1m4 0h1m1 0h2m8 0h1m3 0h2m6 0h2m9 0h1m10 0h1m3 0h1m5 0h1m1 0h1m5 0h2m1 0h1m4 0h1m1 0h1m1 0h2m4 0h1m2 0h1m10 0h2m4 0h1m7 0h1m1 0h1m4 0h1m3 0h2m1 0h1m7 0h1m7 0h1m23 0h1m13 0h2m2 0h1m3 0h1m1 0h2m1 0h1m7 0h1m1 0h1m12 0h2m13 0h1m10 0h1m2 0h1m6 0h2m5 0h1m5 0h1m5 0h1m8 0h1m22 0h2m3 0h1m1 0h1m2 0h1m1 0h1m1 0h1m4 0h1m5 0h2m5 0h1m10 0h1m14 0h1m6 0h1m17 0h1m1 0h1m3 0h1m2 0h1m1 0h1m14 0h1m1 0h1m4 0h1m3 0h1m2 0h1m1 0h1m4 0h1m8 0h2m9 0h1m14 0h2m4 0h1m7 0h1m9 0h1m2 0h1m2 0h1m6 0h1m6 0h1m1 0h1m2 0h1m7 0h1m8 0h2m2 0h1m11 0h1m9 0h2m13 0h1m19 0h1m4 0h1m22 0h1m1 0h2m1 0h1m3 0h2m1 0h1m7 0h1m9 0h2m3 0h1m1 0h1m1 0h1m6 0h1m3 0h2m6 0h2m5 0h1m1 0h1m14 0h2m1 0h2m21 0h1m3 0h2m2 0h1m9 0h1m1 0h1m6 0h1m3 0h2m10 0h1m12 0h1m17 0h1m1 0h2m2 0h1m1 0h1m7 0h1M278 702.5h1m1 0h1m2 0h1m5 0h2m1 0h1m5 0h1m23 0h2m1 0h1m3 0h1m51 0h1m5 0h1m17 0h2m13 0h1m18 0h1m2 0h2m2 0h2m26 0h1m20 0h1m5 0h2m17 0h1m21 0h1m7 0h2m22 0h2m5 0h2m22 0h1m1 0h1m3 0h1m16 0h1m5 0h1m4 0h1m53 0h1m20 0h1m5 0h2m8 0h1m5 0h1m36 0h2m9 0h1m5 0h2m9 0h1m12 0h1m42 0h1m51 0h1m2 0h1m2 0h1m24 0h1m2 0h1m6 0h1m5 0h1m4 0h1m37 0h2m4 0h1m33 0h1m9 0h1m1 0h1m26 0h1m1 0h1m11 0h2m8 0h2m21 0h1m1 0h1m14 0h1m7 0h1m11 0h2m5 0h1m14 0h2m3 0h2m8 0h2m5 0h1m23 0h2m13 0h2m10 0h1m2 0h1m26 0h1m34 0h1m6 0h2m9 0h1m6 0h1m10 0h2m10 0h1M284 729.5h1m12 0h1m1 0h2m12 0h1m10 0h1m14 0h2m3 0h2m5 0h2m8 0h2m6 0h2m27 0h1m1 0h1m19 0h1m6 0h1m4 0h2m8 0h1m3 0h2m59 0h1m7 0h2m4 0h1m57 0h1m24 0h2m3 0h1m7 0h1m9 0h1m13 0h2m10 0h1m13 0h2m9 0h1m34 0h2m13 0h1m14 0h1m11 0h1m23 0h1m1 0h2m8 0h1m1 0h1m6 0h1m9 0h2m1 0h1m5 0h1m3 0h2m1 0h1m5 0h1m2 0h1m21 0h1m13 0h2m3 0h2m15 0h2m8 0h1m18 0h1m18 0h1m10 0h1m3 0h1m9 0h1m3 0h1m2 0h1m4 0h1m5 0h1m5 0h1m5 0h2m9 0h1m21 0h1m7 0h1m31 0h1m7 0h2m5 0h1m3 0h1m1 0h1m4 0h1m1 0h1m2 0h2m4 0h2m5 0h1m3 0h1m3 0h1m25 0h1m5 0h2m10 0h1m40 0h1m7 0h2m22 0h2m4 0h1m15 0h2m4 0h1m29 0h1m13 0h1m7 0h2m4 0h1m8 0h1m6 0h1m3 0h2m8 0h1m1 0h2m4 0h2m1 0h2m5 0h1m23 0h1M283 732.5h2m16 0h1m69 0h2m9 0h1m21 0h1m10 0h1m3 0h1m1 0h1m61 0h2m23 0h1m1 0h2m10 0h1m16 0h1m9 0h1m37 0h1m12 0h1m6 0h1m39 0h1m15 0h1m9 0h1m15 0h1m13 0h1m7 0h1m36 0h2m25 0h1m12 0h1m11 0h2m38 0h1m4 0h1m1 0h2m17 0h1m32 0h1m6 0h2m4 0h1m2 0h1m26 0h1m2 0h1m4 0h1m9 0h2m16 0h2m15 0h1m14 0h1m72 0h1m1 0h2m4 0h1m4 0h1m44 0h2m24 0h1m25 0h2m8 0h1m30 0h1m29 0h2m3 0h2m1 0h1m1 0h1m5 0h2m16 0h1m22 0h1m3 0h1m2 0h1m4 0h1m12 0h1m3 0h2m30 0h1m16 0h1M281 759.5h1m3 0h2m2 0h2m14 0h1m16 0h2m10 0h1m5 0h2m11 0h1m10 0h1m2 0h1m36 0h1m54 0h1m1 0h1m5 0h1m7 0h1m1 0h1m27 0h1m1 0h1m6 0h2m6 0h1m7 0h1m12 0h2m1 0h2m11 0h1m15 0h2m5 0h2m3 0h1m15 0h2m1 0h1m8 0h1m13 0h1m1 0h2m9 0h1m1 0h1m6 0h2m20 0h1m4 0h1m4 0h1m56 0h1m16 0h1m13 0h2m6 0h2m15 0h2m1 0h1m4 0h2m21 0h1m11 0h1m10 0h1m20 0h2m1 0h1m14 0h2m16 0h1m18 0h1m13 0h2m5 0h1m5 0h1m2 0h1m4 0h1m4 0h1m4 0h1m5 0h1m3 0h1m24 0h1m2 0h1m10 0h1m1 0h1m6 0h1m13 0h1m6 0h1m17 0h1m21 0h1m6 0h1m4 0h1m6 0h1m6 0h1m3 0h1m2 0h1m17 0h1m15 0h1m1 0h1m17 0h2m7 0h2m5 0h1m25 0h1m7 0h1m1 0h1m2 0h1m7 0h1m5 0h1m1 0h2m2 0h2m5 0h1m13 0h1m18 0h1m8 0h1m2 0h1m5 0h1m10 0h2m3 0h1m3 0h1m1 0h1m12 0h1m2 0h1m42 0h1m5 0h1M278 762.5h1m2 0h1m2 0h1m10 0h1m8 0h1m10 0h1m2 0h2m12 0h1m5 0h1m5 0h1m5 0h1m5 0h1m14 0h2m9 0h2m3 0h1m20 0h1m10 0h1m3 0h2m19 0h2m2 0h2m4 0h1m3 0h2m14 0h1m2 0h2m49 0h1m15 0h1m5 0h1m1 0h1m5 0h1m6 0h1m11 0h1m2 0h1m47 0h1m2 0h2m29 0h1m11 0h1m3 0h2m4 0h1m2 0h1m5 0h1m2 0h1m4 0h1m15 0h2m29 0h1m3 0h1m8 0h1m15 0h2m7 0h2m24 0h1m2 0h1m9 0h2m15 0h1m1 0h2m11 0h1m6 0h1m10 0h1m3 0h1m38 0h1m1 0h1m7 0h1m1 0h1m5 0h1m7 0h1m4 0h1m1 0h2m2 0h1m1 0h1m12 0h2m1 0h1m6 0h1m5 0h1m3 0h1m7 0h1m5 0h2m11 0h1m30 0h2m9 0h2m2 0h1m11 0h1m11 0h1m1 0h2m11 0h1m4 0h1m22 0h1m13 0h2m2 0h1m8 0h2m8 0h2m32 0h1m4 0h2m24 0h2m13 0h2m21 0h2m3 0h1m3 0h1m11 0h1m15 0h1m1 0h1m3 0h1m15 0h1m4 0h1m12 0h1m21 0h1m9 0h1m2 0h1m11 0h1m6 0h1M282 790.5h2m14 0h2m2 0h1m15 0h1m5 0h2m2 0h1m3 0h1m2 0h1m6 0h2m1 0h1m2 0h1m1 0h1m1 0h1m5 0h2m4 0h1m2 0h1m3 0h1m6 0h1m8 0h1m3 0h1m4 0h1m1 0h2m1 0h2m7 0h1m5 0h1m2 0h2m26 0h1m2 0h2m7 0h1m1 0h2m3 0h1m1 0h1m2 0h1m5 0h1m1 0h1m9 0h1m5 0h1m6 0h1m11 0h1m3 0h1m1 0h1m2 0h1m4 0h2m15 0h2m2 0h2m6 0h1m3 0h1m12 0h2m10 0h1m4 0h2m8 0h1m1 0h2m4 0h2m17 0h1m1 0h1m16 0h1m2 0h2m18 0h1m2 0h1m8 0h1m4 0h1m1 0h1m2 0h2m4 0h1m1 0h2m3 0h2m13 0h1m5 0h2m7 0h1m1 0h2m1 0h2m1 0h1m6 0h1m5 0h2m2 0h1m2 0h1m3 0h1m3 0h1m4 0h1m2 0h2m11 0h1m4 0h2m3 0h1m7 0h2m7 0h2m19 0h1m10 0h1m2 0h1m5 0h1m8 0h1m4 0h1m3 0h1m1 0h1m3 0h1m4 0h1m5 0h1m5 0h1m10 0h1m11 0h1m11 0h1m3 0h1m1 0h1m2 0h1m8 0h2m3 0h1m1 0h1m1 0h1m6 0h1m8 0h2m17 0h1m9 0h1m15 0h2m27 0h1m14 0h2m3 0h2m9 0h2m6 0h1m5 0h1m2 0h1m4 0h1m1 0h1m6 0h2m1 0h1m10 0h1m9 0h1m6 0h2m6 0h1m2 0h1m4 0h1m1 0h2m3 0h1m8 0h1m13 0h1m9 0h1m2 0h1m4 0h1m7 0h1m6 0h1m1 0h1m8 0h1m5 0h2m16 0h1m6 0h2m2 0h1m1 0h1m1 0h1m1 0h1m1 0h1m8 0h1m4 0h2m1 0h1m11 0h1m7 0h1m1 0h1m1 0h1m2 0h1m2 0h1m9 0h1m9 0h1m2 0h2m1 0h1m8 0h2m1 0h1m12 0h1m3 0h1m5 0h2m3 0h1m5 0h1M285 793.5h2m25 0h1m3 0h1m8 0h2m1 0h2m2 0h1m37 0h1m4 0h1m11 0h2m18 0h1m1 0h1m10 0h1m11 0h1m11 0h1m2 0h1m15 0h1m7 0h1m22 0h1m17 0h1m12 0h2m3 0h1m1 0h1m6 0h2m2 0h1m2 0h1m2 0h2m6 0h1m4 0h1m10 0h1m7 0h1m2 0h2m6 0h2m11 0h2m6 0h1m2 0h1m1 0h1m13 0h2m1 0h2m10 0h1m5 0h1m2 0h1m9 0h1m33 0h1m10 0h1m18 0h2m5 0h1m7 0h1m14 0h2m26 0h1m21 0h2m25 0h1m25 0h2m1 0h1m4 0h1m8 0h1m16 0h1m12 0h1m5 0h1m6 0h1m27 0h2m3 0h1m12 0h1m5 0h2m4 0h1m10 0h1m6 0h1m15 0h1m1 0h1m11 0h1m5 0h1m13 0h1m7 0h1m15 0h1m1 0h1m2 0h1m13 0h2m9 0h2m17 0h1m2 0h1m9 0h1m2 0h1m16 0h1m6 0h1m4 0h2m4 0h1m5 0h2m15 0h2m55 0h2m1 0h1m38 0h1m5 0h2m7 0h1m15 0h2m5 0h1m11 0h2m1 0h1m9 0h2m11 0h2m20 0h1M288 820.5h1m6 0h2m9 0h1m11 0h2m32 0h1m5 0h1m6 0h1m7 0h1m12 0h1m1 0h1m5 0h1m1 0h1m5 0h2m6 0h1m1 0h1m18 0h2m1 0h1m25 0h2m4 0h1m9 0h1m7 0h1m7 0h1m1 0h1m5 0h1m5 0h2m5 0h2m4 0h1m2 0h2m12 0h1m12 0h1m7 0h1m19 0h1m13 0h1m1 0h1m22 0h1m14 0h1m1 0h1m19 0h2m12 0h1m7 0h1m5 0h1m3 0h1m5 0h1m8 0h2m7 0h1m5 0h1m17 0h1m5 0h1m14 0h2m11 0h1m4 0h1m1 0h2m13 0h1m9 0h2m13 0h1m7 0h1m2 0h1m1 0h1m2 0h1m5 0h1m13 0h2m2 0h1m12 0h1m21 0h2m3 0h1m7 0h1m13 0h2m8 0h1m31 0h1m5 0h2m3 0h1m2 0h1m2 0h1m14 0h1m1 0h1m11 0h1m34 0h1m27 0h1m2 0h2m3 0h1m15 0h2m10 0h1m7 0h2m4 0h1m19 0h1m6 0h2m6 0h1m7 0h2m2 0h2m15 0h1m1 0h2m2 0h1m8 0h1m8 0h1m6 0h1m4 0h1m4 0h1m2 0h1m5 0h1m8 0h1m1 0h1m2 0h1m28 0h2m4 0h2m14 0h1m2 0h1m7 0h1m36 0h1m8 0h1m8 0h1m14 0h1m5 0h1m1 0h1m10 0h1M277 823.5h2m18 0h1m1 0h1m6 0h1m27 0h1m10 0h1m11 0h1m7 0h2m2 0h1m13 0h1m7 0h1m11 0h2m16 0h2m18 0h1m8 0h1m8 0h1m6 0h1m17 0h1m24 0h1m5 0h1m4 0h1m30 0h1m11 0h2m13 0h1m1 0h1m6 0h1m12 0h1m3 0h1m4 0h1m3 0h1m11 0h1m2 0h1m7 0h1m2 0h2m7 0h1m4 0h1m1 0h2m7 0h1m24 0h1m21 0h1m21 0h1m4 0h1m6 0h1m7 0h1m9 0h1m23 0h1m13 0h1m4 0h1m3 0h1m14 0h1m4 0h2m6 0h2m2 0h1m1 0h1m4 0h1m2 0h1m8 0h2m5 0h1m7 0h1m11 0h1m7 0h1m7 0h1m4 0h1m6 0h2m2 0h2m5 0h2m1 0h2m9 0h1m1 0h1m16 0h1m1 0h1m11 0h1m1 0h1m9 0h1m17 0h1m1 0h1m3 0h2m4 0h1m14 0h2m1 0h2m4 0h2m10 0h1m15 0h1m1 0h2m12 0h1m2 0h2m15 0h2m23 0h2m1 0h1m18 0h1m4 0h1m1 0h1m12 0h1m9 0h1m5 0h1m17 0h2m4 0h1m6 0h1m2 0h1m26 0h2m40 0h2m5 0h1m10 0h1m7 0h2m21 0h1m1 0h1m8 0h1m6 0h1m17 0h1m15 0h1M305 850.5h1m35 0h1m17 0h1m23 0h2m13 0h1m32 0h2m14 0h1m15 0h1m11 0h1m3 0h1m43 0h2m1 0h1m15 0h1m18 0h1m38 0h1m47 0h1m4 0h1m18 0h2m107 0h2m40 0h2m15 0h1m8 0h1m30 0h1m8 0h1m35 0h1m30 0h1m18 0h2m82 0h1m2 0h1m42 0h1m1 0h1m2 0h1m9 0h1m30 0h2m30 0h2m26 0h2m3 0h1m29 0h2m12 0h1m57 0h1m37 0h1m1 0h1M286 853.5h1m15 0h1m1 0h1m6 0h1m1 0h1m17 0h1m6 0h2m3 0h1m1 0h1m4 0h1m11 0h2m11 0h1m17 0h1m3 0h1m6 0h1m14 0h1m1 0h1m2 0h1m1 0h1m11 0h2m6 0h2m9 0h2m5 0h2m5 0h1m7 0h1m1 0h1m2 0h1m5 0h1m2 0h2m4 0h1m4 0h1m4 0h2m5 0h1m36 0h1m4 0h2m9 0h1m2 0h1m3 0h1m3 0h1m1 0h1m1 0h1m2 0h1m1 0h1m5 0h2m14 0h2m23 0h2m1 0h1m4 0h1m1 0h1m3 0h1m10 0h1m1 0h1m10 0h1m6 0h2m2 0h1m3 0h2m2 0h1m1 0h1m14 0h1m10 0h1m20 0h1m1 0h1m12 0h1m6 0h1m1 0h1m9 0h2m6 0h1m1 0h1m1 0h1m8 0h1m7 0h1m4 0h1m14 0h1m27 0h1m7 0h2m6 0h2m2 0h2m11 0h1m4 0h1m5 0h1m3 0h1m3 0h1m2 0h1m14 0h1m4 0h1m14 0h1m4 0h1m19 0h1m8 0h1m2 0h1m4 0h1m9 0h1m11 0h2m7 0h1m6 0h2m12 0h1m2 0h1m2 0h1m6 0h1m2 0h1m6 0h1m12 0h2m3 0h1m8 0h1m5 0h2m14 0h1m11 0h1m5 0h1m8 0h2m7 0h1m5 0h1m8 0h1m3 0h1m10 0h2m17 0h1m7 0h1m5 0h2m1 0h1m15 0h1m1 0h1m2 0h1m8 0h1m3 0h1m6 0h1m6 0h1m1 0h1m2 0h1m7 0h1m2 0h2m3 0h1m1 0h2m10 0h2m7 0h1m1 0h1m5 0h1m13 0h2m2 0h2m17 0h2m4 0h1m22 0h1m2 0h1m1 0h1m4 0h1m12 0h2M281 881.5h1m9 0h1m4 0h2m7 0h2m1 0h1m5 0h1m2 0h2m16 0h1m13 0h1m9 0h1m3 0h2m2 0h1m4 0h2m5 0h2m15 0h1m10 0h1m4 0h1m8 0h1m7 0h2m2 0h1m5 0h1m1 0h2m5 0h1m9 0h1m3 0h1m1 0h1m1 0h1m1 0h1m2 0h1m5 0h1m6 0h1m1 0h2m4 0h1m5 0h2m2 0h1m14 0h1m1 0h1m1 0h2m4 0h1m1 0h1m16 0h1m2 0h2m13 0h2m11 0h1m6 0h1m4 0h1m1 0h1m18 0h1m5 0h1m9 0h1m2 0h1m12 0h2m1 0h1m4 0h1m1 0h1m2 0h1m10 0h1m7 0h1m2 0h2m1 0h1m7 0h1m13 0h1m14 0h1m7 0h2m4 0h1m8 0h1m5 0h1m2 0h1m2 0h1m5 0h1m4 0h1m4 0h2m7 0h2m3 0h1m1 0h1m6 0h1m6 0h1m1 0h1m1 0h1m3 0h2m1 0h1m5 0h1m2 0h2m3 0h1m4 0h2m1 0h1m3 0h1m5 0h1m4 0h1m7 0h1m2 0h1m3 0h1m2 0h1m2 0h2m6 0h1m6 0h1m5 0h2m1 0h1m3 0h1m1 0h1m13 0h2m1 0h1m6 0h1m1 0h1m1 0h2m4 0h1m4 0h1m1 0h2m8 0h2m6 0h1m3 0h1m7 0h2m3 0h2m12 0h1m9 0h2m6 0h1m11 0h1m3 0h1m6 0h1m5 0h1m11 0h1m8 0h2m7 0h2m1 0h1m1 0h1m12 0h1m12 0h1m2 0h2m2 0h2m19 0h1m8 0h2m1 0h1m4 0h2m2 0h1m4 0h2m10 0h1m2 0h1m1 0h1m4 0h2m9 0h1m1 0h1m2 0h1m2 0h1m2 0h1m4 0h2m4 0h1m12 0h1m1 0h2m4 0h2m7 0h1m1 0h1m9 0h2m1 0h1m28 0h2m3 0h1m3 0h1m8 0h1m6 0h2m1 0h1m7 0h1m1 0h1m1 0h1m3 0h1m11 0h1m6 0h1m9 0h1m8 0h2m2 0h1m6 0h1m2 0h1m1 0h1m11 0h1m1 0h1m1 0h1m8 0h1M278 884.5h1m6 0h2m3 0h1m1 0h2m9 0h1m13 0h1m6 0h1m17 0h1m4 0h1m1 0h1m21 0h1m10 0h2m4 0h1m13 0h1m6 0h2m8 0h1m6 0h1m19 0h2m21 0h1m5 0h2m1 0h2m36 0h1m13 0h1m6 0h1m7 0h1m2 0h1m1 0h1m29 0h1m6 0h1m2 0h1m3 0h1m20 0h1m1 0h1m6 0h1m20 0h1m2 0h1m3 0h2m1 0h1m39 0h2m1 0h1m4 0h1m8 0h1m1 0h2m10 0h1m2 0h1m18 0h1m6 0h1m13 0h2m3 0h2m9 0h1m13 0h1m1 0h1m11 0h2m6 0h1m12 0h1m1 0h1m15 0h1m28 0h1m10 0h1m47 0h1m15 0h1m12 0h1m5 0h1m3 0h1m3 0h1m6 0h1m5 0h1m4 0h2m4 0h2m6 0h1m7 0h1m1 0h1m18 0h1m5 0h1m3 0h2m18 0h1m2 0h1m19 0h2m20 0h2m13 0h1m9 0h1m4 0h1m2 0h1m7 0h1m16 0h1m6 0h1m1 0h1m3 0h2m10 0h1m2 0h1m2 0h2m2 0h1m3 0h1m1 0h2m11 0h1m3 0h1m6 0h1m45 0h1m33 0h1m17 0h1m33 0h2m5 0h2m4 0h1M288 911.5h1m145 0h1m9 0h2m12 0h1m51 0h1m10 0h1m49 0h1m21 0h2m80 0h1m5 0h1m52 0h2m8 0h1m59 0h2m19 0h1m22 0h1m15 0h2m17 0h1m47 0h1m11 0h1m15 0h1m13 0h1m18 0h1m46 0h1m26 0h1m79 0h2m75 0h1m12 0h1m41 0h1m45 0h1"/><path stroke="#0ff" fill="none" d="M289 212.5h2m6 0h2m29 0h1m7 0h1m4 0h1m36 0h1m9 0h1m12 0h1m15 0h1m5 0h1m10 0h2m3 0h2m2 0h1m6 0h1m5 0h2m8 0h1m6 0h1m8 0h1m31 0h1m9 0h1m3 0h1m8 0h2m8 0h2m20 0h1m11 0h1m4 0h1m4 0h2m19 0h1m9 0h1m10 0h1m3 0h1m14 0h1m9 0h1m1 0h1m17 0h1m2 0h1m22 0h1m13 0h1m13 0h1m5 0h1m10 0h1m4 0h1m6 0h1m2 0h1m2 0h1m10 0h1m20 0h1m9 0h2m6 0h1m8 0h1m7 0h1m4 0h1m13 0h2m16 0h1m1 0h1m6 0h2m3 0h1m3 0h1m3 0h2m21 0h1m7 0h1m2 0h1m10 0h2m12 0h1m3 0h1m42 0h1m2 0h2m3 0h1m2 0h1m5 0h1m3 0h1m4 0h2m24 0h1m5 0h1m17 0h1m11 0h1m6 0h1m40 0h1m11 0h1m15 0h1m2 0h1m6 0h1m7 0h1m17 0h2m6 0h1m14 0h1m6 0h2m2 0h2m2 0h1m3 0h1m9 0h2m9 0h1m6 0h1m10 0h1m15 0h1m2 0h2m1 0h1m15 0h2m8 0h1m1 0h2m14 0h1m4 0h1m16 0h1m4 0h1m6 0h1m5 0h1m7 0h1m1 0h1M280 217.5h1m35 0h2m9 0h1m14 0h1m7 0h2m76 0h1m1 0h1m19 0h2m18 0h1m37 0h1m75 0h2m76 0h1m7 0h2m13 0h2m1 0h1m45 0h2m31 0h2m10 0h1m3 0h2m48 0h1m3 0h1m10 0h2m12 0h2m12 0h1m1 0h2m23 0h1m15 0h1m24 0h1m29 0h1m11 0h1m12 0h1m19 0h2m6 0h1m15 0h2m28 0h1m45 0h1m2 0h1m20 0h1m8 0h2m19 0h1m3 0h1m30 0h1m34 0h1m23 0h1m12 0h1m20 0h1m4 0h1m2 0h1m4 0h1m52 0h1M305 243.5h1m18 0h1m10 0h2m18 0h1m21 0h2m1 0h1m74 0h2m16 0h1m27 0h2m11 0h1m28 0h1m14 0h1m13 0h1m24 0h2m10 0h1m33 0h1m9 0h1m8 0h2m3 0h1m64 0h1m1 0h1m1 0h1m11 0h1m4 0h1m15 0h2m7 0h1m6 0h1m7 0h1m8 0h2m38 0h1m28 0h2m7 0h1m1 0h1m3 0h1m6 0h2m3 0h1m17 0h2m41 0h1m42 0h1m13 0h1m8 0h1m13 0h2m34 0h1m16 0h2m34 0h1m8 0h1m6 0h1m28 0h1m10 0h1m28 0h1m21 0h2m13 0h1m11 0h1m8 0h1m4 0h1m3 0h1m16 0h1m11 0h1m37 0h1m16 0h1m1 0h2M283 248.5h1m6 0h2m2 0h2m9 0h2m3 0h1m7 0h1m21 0h1m2 0h2m17 0h2m3 0h1m16 0h1m17 0h1m20 0h1m4 0h2m15 0h1m22 0h1m9 0h1m10 0h2m11 0h1m3 0h1m7 0h2m3 0h2m4 0h1m30 0h1m2 0h2m1 0h2m20 0h1m24 0h2m5 0h1m4 0h1m11 0h1m10 0h1m21 0h2m2 0h2m3 0h1m2 0h1m20 0h2m11 0h1m7 0h1m12 0h2m9 0h2m6 0h2m24 0h1m4 0h1m2 0h2m11 0h1m10 0h2m12 0h1m31 0h1m21 0h1m2 0h1m6 0h1m4 0h2m5 0h1m5 0h1m12 0h2m10 0h1m43 0h1m10 0h2m10 0h1m5 0h2m6 0h1m1 0h1m15 0h1m11 0h1m6 0h1m2 0h2m10 0h1m33 0h1m8 0h2m1 0h1m2 0h1m3 0h1m16 0h1m1 0h1m6 0h1m3 0h1m3 0h1m1 0h1m14 0h1m11 0h1m4 0h2m1 0h2m7 0h2m4 0h1m14 0h1m14 0h1m21 0h1m5 0h1m5 0h1m4 0h1m13 0h1m11 0h1m8 0h1m8 0h1m8 0h2m16 0h1m14 0h2m8 0h1m19 0h1M280 273.5h1m5 0h2m4 0h1m6 0h1m1 0h1m1 0h1m14 0h1m5 0h2m3 0h2m6 0h2m6 0h1m2 0h1m1 0h1m29 0h1m10 0h1m12 0h1m11 0h1m2 0h1m4 0h1m11 0h1m29 0h2m36 0h2m1 0h1m10 0h2m3 0h2m70 0h1m2 0h1m6 0h1m13 0h2m6 0h1m2 0h1m3 0h1m8 0h1m26 0h1m1 0h1m1 0h1m7 0h1m4 0h1m9 0h1m3 0h1m18 0h1m46 0h1m5 0h1m17 0h1m19 0h1m3 0h1m30 0h1m1 0h1m8 0h1m4 0h1m3 0h1m1 0h1m3 0h1m3 0h2m2 0h1m5 0h1m3 0h1m1 0h1m10 0h2m11 0h1m29 0h1m24 0h1m2 0h1m4 0h1m2 0h1m4 0h1m11 0h2m6 0h1m17 0h1m26 0h1m3 0h1m9 0h1m18 0h2m20 0h1m1 0h1m21 0h1m8 0h1m12 0h2m35 0h1m11 0h1m11 0h1m1 0h2m4 0h2m1 0h1m8 0h1m4 0h1m12 0h2m2 0h1m1 0h1m5 0h1m2 0h2m12 0h1m2 0h1m27 0h1m2 0h1m8 0h1m4 0h1m31 0h1m16 0h1m13 0h2m2 0h2M278 278.5h1m17 0h1m37 0h2m7 0h2m11 0h1m71 0h2m22 0h2m14 0h1m16 0h1m62 0h1m6 0h1m6 0h1m37 0h1m34 0h1m15 0h2m32 0h1m3 0h1m1 0h1m36 0h2m19 0h1m43 0h1m21 0h2m27 0h1m25 0h1m15 0h1m1 0h1m16 0h1m11 0h1m4 0h1m10 0h1m8 0h1m20 0h1m4 0h1m11 0h1m22 0h2m3 0h2m16 0h1m5 0h1m2 0h2m7 0h1m3 0h1m22 0h1m44 0h1m6 0h1m10 0h2m32 0h1m24 0h1m29 0h1m61 0h2m7 0h1m1 0h1m16 0h1m2 0h2m12 0h1m10 0h1m43 0h1m3 0h1M278 303.5h1m25 0h1m1 0h1m12 0h2m6 0h1m6 0h1m32 0h1m6 0h1m1 0h1m16 0h1m6 0h2m15 0h2m5 0h1m1 0h1m15 0h2m5 0h1m8 0h1m12 0h1m1 0h2m10 0h1m2 0h1m10 0h1m14 0h2m6 0h1m5 0h2m7 0h1m17 0h2m10 0h1m15 0h1m11 0h1m10 0h2m9 0h1m2 0h1m12 0h2m1 0h1m3 0h1m3 0h1m9 0h1m2 0h1m8 0h2m10 0h2m2 0h1m5 0h1m39 0h1m53 0h2m3 0h2m6 0h2m8 0h1m20 0h2m19 0h1m7 0h1m18 0h1m19 0h2m7 0h1m5 0h1m16 0h1m3 0h1m6 0h1m1 0h2m13 0h1m16 0h1m5 0h2m9 0h1m9 0h1m11 0h1m20 0h1m12 0h1m6 0h1m3 0h1m13 0h2m4 0h2m16 0h1m16 0h1m16 0h1m2 0h2m6 0h2m1 0h1m14 0h1m12 0h2m4 0h1m17 0h1m1 0h1m14 0h1m12 0h1m1 0h1m8 0h1m2 0h1m16 0h1m11 0h1m19 0h2m6 0h1m1 0h2m19 0h1m9 0h1m21 0h1m1 0h1m6 0h1m18 0h1m8 0h2M280 308.5h1m2 0h1m1 0h1m8 0h1m5 0h1m19 0h1m8 0h1m13 0h1m11 0h1m9 0h1m58 0h1m6 0h1m4 0h1m34 0h1m4 0h1m2 0h1m12 0h1m12 0h1m6 0h1m15 0h1m31 0h1m14 0h1m1 0h2m28 0h2m17 0h1m4 0h1m10 0h2m26 0h2m33 0h2m2 0h1m10 0h2m3 0h1m5 0h2m17 0h1m21 0h2m20 0h2m21 0h1m1 0h2m33 0h2m3 0h1m27 0h1m5 0h2m13 0h2m12 0h2m19 0h2m18 0h1m2 0h1m4 0h1m2 0h1m4 0h1m1 0h1m25 0h1m15 0h2m9 0h2m14 0h1m10 0h1m47 0h2m6 0h1m16 0h1m24 0h2m9 0h2m3 0h2m9 0h1m6 0h1m10 0h1m30 0h2m14 0h1m52 0h2m22 0h2m21 0h2m32 0h2m13 0h1M279 334.5h2m16 0h1m6 0h1m5 0h1m15 0h1m24 0h1m1 0h2m3 0h2m2 0h1m5 0h1m1 0h2m4 0h2m3 0h1m4 0h1m1 0h1m8 0h1m2 0h1m10 0h1m3 0h1m5 0h1m17 0h2m2 0h1m3 0h2m2 0h1m13 0h2m12 0h2m7 0h1m2 0h2m5 0h1m3 0h1m8 0h1m3 0h1m22 0h1m2 0h1m2 0h2m15 0h1m3 0h1m2 0h1m10 0h2m1 0h2m2 0h1m14 0h1m22 0h1m1 0h2m1 0h2m7 0h1m4 0h1m2 0h1m8 0h1m1 0h1m10 0h1m1 0h2m24 0h1m5 0h1m4 0h2m5 0h1m6 0h1m2 0h1m8 0h2m13 0h1m15 0h1m3 0h1m11 0h1m1 0h1m10 0h2m5 0h1m11 0h1m5 0h1m8 0h1m5 0h1m52 0h1m21 0h2m6 0h1m2 0h1m19 0h1m11 0h1m10 0h1m6 0h1m11 0h2m1 0h1m11 0h1m2 0h2m10 0h1m20 0h1m6 0h2m7 0h2m19 0h1m4 0h1m6 0h1m16 0h1m10 0h2m3 0h1m10 0h2m4 0h1m5 0h2m1 0h1m2 0h1m2 0h2m7 0h1m2 0h1m6 0h1m8 0h1m14 0h1m2 0h1m6 0h1m2 0h1m1 0h1m11 0h2m26 0h1m3 0h2m12 0h2m7 0h1m13 0h1m4 0h1m7 0h2m2 0h2m4 0h1m8 0h1m8 0h1m13 0h1m7 0h1m7 0h1m2 0h1m2 0h2m2 0h1m2 0h1m8 0h1m17 0h1M348 339.5h2m4 0h1m36 0h2m8 0h2m5 0h1m17 0h1m2 0h1m47 0h1m12 0h1m9 0h1m44 0h1m6 0h1m14 0h1m2 0h1m24 0h1m14 0h2m68 0h1m34 0h1m49 0h2m23 0h1m21 0h2m7 0h2m25 0h2m35 0h1m9 0h1m5 0h2m11 0h1m83 0h2m1 0h2m16 0h1m25 0h1m2 0h1m30 0h2m20 0h1m22 0h2m3 0h2m30 0h1m26 0h1m10 0h1m5 0h1m9 0h1m21 0h1m22 0h1m5 0h1m33 0h1m56 0h1m16 0h1m21 0h1M285 364.5h1m15 0h1m1 0h1m7 0h1m6 0h1m8 0h1m21 0h1m8 0h1m10 0h1m5 0h1m15 0h1m14 0h2m13 0h2m2 0h1m18 0h1m14 0h2m18 0h1m2 0h1m23 0h1m10 0h2m4 0h1m17 0h1m46 0h2m69 0h1m4 0h2m3 0h1m14 0h2m2 0h1m3 0h2m8 0h1m12 0h1m5 0h1m17 0h1m4 0h1m15 0h2m11 0h1m1 0h1m3 0h1m7 0h1m11 0h1m9 0h2m5 0h2m3 0h1m13 0h2m18 0h1m13 0h2m20 0h1m1 0h1m1 0h1m6 0h1m1 0h2m34 0h2m10 0h1m34 0h1m21 0h1m24 0h1m9 0h1m13 0h1m31 0h1m2 0h1m4 0h2m3 0h1m15 0h1m8 0h2m8 0h2m2 0h2m8 0h1m19 0h1m20 0h1m24 0h1m15 0h1m22 0h1m29 0h2m6 0h1m16 0h1m21 0h1m6 0h1m10 0h1M303 369.5h1m1 0h1m22 0h1m1 0h1m9 0h1m16 0h2m17 0h1m3 0h2m6 0h2m1 0h1m26 0h1m1 0h1m36 0h1m10 0h1m38 0h1m26 0h2m2 0h1m32 0h1m4 0h2m10 0h2m11 0h1m12 0h1m22 0h1m14 0h2m5 0h1m9 0h1m13 0h1m9 0h1m24 0h1m10 0h1m17 0h2m7 0h1m6 0h1m19 0h1m11 0h1m1 0h1m11 0h1m14 0h1m16 0h2m3 0h1m7 0h1m21 0h1m14 0h1m36 0h2m3 0h1m6 0h1m8 0h2m3 0h1m4 0h2m8 0h2m7 0h1m3 0h2m7 0h1m2 0h2m22 0h2m3 0h1m1 0h1m2 0h1m1 0h2m21 0h1m11 0h1m3 0h1m15 0h2m11 0h1m2 0h1m37 0h1m63 0h1m26 0h1m1 0h1m27 0h2m1 0h1m25 0h1m2 0h1m9 0h1m5 0h1m20 0h1m13 0h2m5 0h1m7 0h1m3 0h1m12 0h1m19 0h2M280 394.5h1m17 0h2m13 0h2m9 0h1m12 0h2m31 0h2m20 0h1m35 0h2m1 0h1m10 0h1m50 0h2m28 0h1m18 0h2m4 0h1m23 0h1m1 0h2m13 0h1m8 0h1m1 0h1m17 0h2m10 0h1m9 0h2m10 0h2m26 0h1m1 0h1m7 0h1m8 0h1m4 0h1m29 0h1m3 0h2m27 0h1m3 0h1m10 0h1m52 0h1m22 0h2m1 0h1m33 0h1m6 0h2m6 0h1m4 0h1m13 0h1m16 0h1m34 0h1m18 0h1m32 0h1m5 0h1m6 0h1m9 0h1m3 0h1m33 0h1m1 0h1m21 0h1m31 0h1m9 0h2m34 0h2m11 0h1m13 0h1m4 0h1m18 0h1m4 0h1m11 0h1m4 0h2m15 0h1m3 0h1m2 0h1m3 0h2m10 0h1m24 0h1m3 0h1m25 0h2m10 0h1m3 0h1m18 0h1M282 399.5h1m11 0h1m5 0h2m2 0h1m11 0h1m7 0h1m9 0h1m66 0h1m7 0h1m8 0h1m15 0h2m23 0h1m7 0h2m2 0h1m24 0h2m5 0h1m10 0h2m23 0h1m9 0h1m7 0h2m6 0h1m35 0h1m48 0h1m5 0h2m7 0h1m9 0h1m3 0h2m3 0h1m44 0h1m7 0h1m17 0h1m14 0h1m5 0h1m1 0h1m24 0h1m12 0h1m2 0h1m8 0h1m7 0h2m5 0h2m39 0h1m20 0h1m5 0h1m2 0h2m1 0h1m21 0h1m13 0h1m24 0h1m56 0h1m22 0h1m16 0h1m3 0h2m2 0h1m16 0h1m30 0h1m1 0h1m12 0h1m23 0h1m20 0h1m13 0h1m12 0h1m2 0h1m5 0h1m13 0h1m3 0h1m11 0h1m9 0h1m15 0h1m1 0h1m36 0h1m28 0h2m41 0h1M284 425.5h2m7 0h1m2 0h1m8 0h1m4 0h1m5 0h2m5 0h1m4 0h1m49 0h1m45 0h1m4 0h1m41 0h1m44 0h2m6 0h1m19 0h2m22 0h1m1 0h1m25 0h1m5 0h2m33 0h1m2 0h2m3 0h1m14 0h1m36 0h2m43 0h2m8 0h2m51 0h1m37 0h1m10 0h1m5 0h1m10 0h1m44 0h2m12 0h1m26 0h1m74 0h1m23 0h1m1 0h1m16 0h1m7 0h1m8 0h1m2 0h1m18 0h1m23 0h2m10 0h2m13 0h2m13 0h1m14 0h2m7 0h2m2 0h1m1 0h2m12 0h1m1 0h2m6 0h1m12 0h1m22 0h1m33 0h2m17 0h1m14 0h1m1 0h1m3 0h1m6 0h1m30 0h1m12 0h1M320 430.5h2m8 0h1m5 0h1m4 0h2m4 0h2m19 0h1m15 0h1m18 0h1m24 0h1m13 0h1m13 0h1m11 0h2m40 0h2m7 0h1m27 0h1m2 0h1m4 0h1m33 0h1m1 0h2m10 0h1m9 0h1m19 0h1m9 0h1m10 0h1m3 0h2m19 0h1m8 0h1m3 0h1m13 0h1m14 0h1m8 0h1m11 0h1m14 0h1m5 0h2m14 0h1m12 0h1m17 0h2m32 0h2m27 0h1m13 0h2m31 0h1m1 0h1m6 0h1m6 0h2m2 0h1m4 0h1m3 0h1m1 0h1m4 0h1m27 0h2m3 0h2m10 0h2m68 0h1m5 0h2m39 0h1m42 0h1m16 0h2m17 0h2m4 0h1m19 0h2m1 0h2m27 0h1m7 0h1m19 0h1m5 0h1m11 0h2m12 0h1m2 0h1m7 0h1m16 0h1m8 0h2m6 0h1m10 0h2m1 0h1m26 0h1M290 455.5h1m7 0h1m2 0h1m32 0h1m9 0h1m1 0h1m8 0h1m32 0h1m34 0h1m5 0h1m10 0h1m3 0h1m12 0h1m24 0h1m2 0h1m8 0h1m1 0h2m33 0h1m24 0h2m1 0h2m13 0h1m2 0h2m4 0h1m5 0h1m2 0h2m16 0h1m10 0h2m9 0h1m3 0h2m13 0h2m7 0h1m4 0h1m14 0h2m30 0h1m15 0h2m4 0h1m19 0h1m32 0h1m2 0h1m5 0h1m1 0h1m2 0h1m14 0h1m2 0h1m24 0h1m13 0h1m5 0h1m1 0h1m6 0h1m10 0h1m4 0h1m19 0h2m30 0h1m9 0h1m14 0h1m17 0h2m23 0h1m5 0h1m2 0h1m9 0h1m13 0h1m5 0h1m1 0h1m17 0h2m21 0h1m5 0h2m4 0h1m4 0h2m1 0h1m36 0h2m11 0h1m8 0h1m2 0h1m14 0h1m3 0h1m13 0h2m2 0h1m1 0h2m24 0h1m1 0h1m12 0h1m18 0h2m1 0h2m3 0h2m32 0h1m11 0h1m6 0h1m2 0h1m2 0h2m21 0h1m3 0h1m22 0h2M291 460.5h1m1 0h1m13 0h1m25 0h2m6 0h1m2 0h1m45 0h1m34 0h1m2 0h1m28 0h2m6 0h1m11 0h1m1 0h1m6 0h1m17 0h2m17 0h1m9 0h1m5 0h1m2 0h1m2 0h1m7 0h1m2 0h1m2 0h1m42 0h1m9 0h1m16 0h1m1 0h1m21 0h2m1 0h1m3 0h2m16 0h1m5 0h1m16 0h1m9 0h1m3 0h1m29 0h1m11 0h1m17 0h1m6 0h1m22 0h1m13 0h1m17 0h1m2 0h1m3 0h1m16 0h1m4 0h1m6 0h2m6 0h1m50 0h1m4 0h1m20 0h1m1 0h1m39 0h1m31 0h1m79 0h1m1 0h1m2 0h1m27 0h1m3 0h1m5 0h1m4 0h2m13 0h1m12 0h2m40 0h2m17 0h1m10 0h1m31 0h1m5 0h1m8 0h1m23 0h1m14 0h1m3 0h1m2 0h1m2 0h2m4 0h1m29 0h1m1 0h2M286 485.5h1m15 0h2m18 0h1m1 0h2m43 0h1m4 0h1m12 0h1m45 0h1m3 0h2m16 0h1m24 0h1m19 0h1m11 0h1m23 0h1m12 0h2m47 0h1m4 0h1m26 0h1m8 0h1m20 0h1m31 0h1m6 0h1m16 0h2m5 0h1m18 0h1m4 0h1m3 0h2m4 0h1m1 0h1m36 0h1m2 0h1m4 0h2m55 0h1m21 0h1m11 0h1m8 0h1m7 0h1m15 0h1m1 0h1m59 0h1m1 0h1m8 0h1m2 0h2m6 0h2m1 0h2m50 0h2m6 0h1m20 0h1m18 0h1m95 0h1m12 0h2m9 0h1m30 0h1m19 0h1m6 0h2m1 0h1m27 0h1m19 0h1m1 0h1m4 0h2m17 0h1m6 0h1m4 0h1M278 490.5h1m10 0h2m9 0h1m10 0h1m11 0h1m6 0h1m1 0h1m39 0h2m4 0h2m2 0h1m6 0h2m2 0h1m25 0h1m6 0h1m6 0h1m5 0h1m9 0h2m19 0h1m3 0h1m10 0h2m3 0h1m1 0h2m1 0h1m1 0h1m9 0h1m6 0h1m17 0h1m8 0h1m26 0h1m2 0h1m3 0h2m24 0h1m9 0h1m15 0h1m8 0h2m3 0h1m12 0h1m3 0h1m1 0h2m1 0h1m21 0h1m55 0h2m15 0h1m27 0h1m5 0h2m4 0h2m16 0h1m61 0h1m45 0h1m1 0h1m23 0h1m66 0h1m42 0h1m15 0h1m17 0h2m19 0h2m24 0h1m41 0h2m16 0h2m5 0h1m20 0h1m23 0h1m45 0h1m9 0h2m15 0h1m8 0h1m24 0h2m3 0h1m1 0h2m13 0h1M282 516.5h1m21 0h1m36 0h1m6 0h1m29 0h1m14 0h1m8 0h2m21 0h1m5 0h2m20 0h1m18 0h1m59 0h1m55 0h1m10 0h1m17 0h2m19 0h1m18 0h1m10 0h1m24 0h1m15 0h1m22 0h1m12 0h2m23 0h1m7 0h1m9 0h1m9 0h2m13 0h1m3 0h1m16 0h1m18 0h1m9 0h1m16 0h1m2 0h1m14 0h1m49 0h1m14 0h1m3 0h1m21 0h2m43 0h1m34 0h1m2 0h1m1 0h1m23 0h1m35 0h2m7 0h2m32 0h2m24 0h1m13 0h2m53 0h1m1 0h2m16 0h1m2 0h2m3 0h1m19 0h1m16 0h1m11 0h1m36 0h1M286 521.5h1m9 0h1m6 0h1m4 0h1m28 0h1m8 0h1m7 0h1m13 0h1m11 0h2m9 0h1m13 0h1m12 0h2m4 0h1m3 0h1m8 0h1m15 0h1m12 0h1m9 0h1m11 0h1m5 0h2m6 0h1m6 0h2m15 0h1m6 0h1m7 0h1m2 0h1m23 0h2m12 0h1m8 0h1m7 0h2m12 0h1m17 0h1m5 0h1m13 0h2m51 0h2m3 0h1m9 0h1m9 0h1m8 0h1m27 0h1m5 0h1m8 0h1m7 0h1m4 0h1m7 0h1m32 0h1m22 0h2m14 0h1m3 0h2m25 0h1m10 0h2m8 0h2m10 0h1m17 0h2m11 0h2m16 0h2m7 0h1m23 0h1m14 0h1m11 0h1m19 0h2m6 0h1m38 0h1m5 0h2m6 0h1m37 0h2m2 0h2m25 0h2m13 0h1m47 0h1m18 0h2m16 0h1m13 0h2m22 0h1m10 0h1m4 0h1m7 0h1m25 0h2m2 0h1m2 0h1m3 0h1m4 0h1M283 546.5h1m10 0h1m1 0h2m2 0h1m2 0h1m6 0h1m2 0h2m22 0h2m20 0h1m37 0h1m2 0h2m20 0h2m24 0h1m2 0h1m5 0h1m45 0h1m8 0h1m2 0h1m2 0h1m29 0h1m12 0h1m4 0h1m32 0h1m19 0h1m4 0h1m5 0h1m11 0h2m6 0h1m30 0h1m14 0h1m20 0h1m3 0h2m26 0h1m5 0h2m2 0h1m17 0h1m9 0h1m3 0h1m2 0h1m12 0h1m1 0h1m43 0h1m3 0h1m46 0h1m24 0h1m1 0h2m1 0h1m3 0h1m6 0h1m3 0h1m28 0h1m1 0h1m30 0h1m2 0h2m27 0h2m3 0h1m8 0h2m55 0h1m18 0h1m13 0h2m11 0h2m1 0h1m11 0h2m10 0h1m8 0h1m2 0h1m23 0h1m13 0h2m5 0h1m1 0h1m35 0h1m12 0h1m3 0h1m10 0h2m7 0h2m34 0h2m3 0h1m17 0h2m21 0h1M292 551.5h1m33 0h1m7 0h1m12 0h2m4 0h1m3 0h1m10 0h1m3 0h1m13 0h1m4 0h1m17 0h1m32 0h2m15 0h1m3 0h1m17 0h1m7 0h2m2 0h1m2 0h1m26 0h1m6 0h1m5 0h1m7 0h2m2 0h1m7 0h1m30 0h1m1 0h2m15 0h1m16 0h1m3 0h2m3 0h2m2 0h1m2 0h1m14 0h1m11 0h1m8 0h2m9 0h2m8 0h1m11 0h2m22 0h1m7 0h1m5 0h1m6 0h1m2 0h1m13 0h1m11 0h1m1 0h1m6 0h1m6 0h2m41 0h2m5 0h1m4 0h1m13 0h2m17 0h1m6 0h1m14 0h1m6 0h1m1 0h1m3 0h1m3 0h1m1 0h1m4 0h1m3 0h1m4 0h1m6 0h2m5 0h1m2 0h2m3 0h1m2 0h1m7 0h1m12 0h1m23 0h1m8 0h1m19 0h2m1 0h2m3 0h2m2 0h2m13 0h1m7 0h1m9 0h1m13 0h1m7 0h1m2 0h1m4 0h1m3 0h1m8 0h1m5 0h1m11 0h2m5 0h1m14 0h1m8 0h1m11 0h2m5 0h1m7 0h1m1 0h1m5 0h1m3 0h1m5 0h1m2 0h1m4 0h1m8 0h1m4 0h1m8 0h2m4 0h1m4 0h1m1 0h2m3 0h1m11 0h1m8 0h1m2 0h2m6 0h1m2 0h1m14 0h2m11 0h1m4 0h1m3 0h1m3 0h2m3 0h1m6 0h1m10 0h1m9 0h1m14 0h2M286 576.5h1m19 0h1m9 0h1m5 0h1m6 0h1m28 0h1m19 0h1m16 0h1m18 0h2m15 0h1m37 0h1m5 0h1m9 0h1m17 0h1m17 0h1m18 0h2m21 0h1m8 0h1m1 0h1m4 0h1m14 0h1m15 0h2m34 0h1m16 0h2m13 0h1m8 0h1m12 0h2m2 0h1m12 0h2m3 0h1m22 0h2m9 0h1m46 0h2m49 0h1m18 0h1m14 0h1m6 0h1m32 0h1m2 0h1m67 0h1m29 0h1m10 0h1m1 0h2m26 0h1m5 0h1m10 0h1m3 0h1m47 0h1m9 0h1m10 0h2m8 0h2m8 0h1m1 0h1m11 0h1m4 0h2m3 0h2m9 0h2m1 0h1m14 0h1m14 0h1m6 0h1m26 0h2m6 0h1m3 0h1m4 0h1m60 0h1m8 0h1m7 0h1M277 581.5h2m11 0h1m4 0h1m2 0h1m6 0h1m15 0h1m1 0h1m14 0h1m5 0h1m3 0h1m16 0h1m11 0h2m1 0h2m2 0h1m11 0h1m14 0h1m2 0h1m11 0h1m19 0h2m4 0h2m5 0h1m2 0h2m13 0h1m4 0h1m11 0h1m20 0h2m16 0h1m9 0h2m1 0h1m16 0h1m12 0h1m23 0h2m8 0h1m23 0h1m2 0h1m5 0h2m1 0h1m6 0h2m2 0h1m15 0h1m24 0h1m15 0h1m20 0h2m14 0h1m17 0h2m1 0h1m3 0h1m5 0h1m4 0h2m9 0h1m7 0h2m5 0h1m3 0h2m6 0h1m6 0h2m25 0h1m2 0h2m14 0h1m2 0h1m22 0h1m8 0h1m27 0h1m3 0h1m6 0h2m2 0h1m6 0h1m2 0h1m14 0h1m7 0h1m3 0h1m40 0h1m1 0h1m37 0h1m4 0h2m19 0h2m2 0h1m12 0h2m3 0h1m9 0h1m36 0h1m10 0h2m5 0h1m1 0h2m4 0h1m13 0h1m30 0h1m2 0h1m18 0h1m23 0h2m2 0h1m4 0h1m5 0h1m1 0h2m5 0h2m21 0h1m19 0h2m15 0h1m11 0h1m16 0h1M289 607.5h1m14 0h1m60 0h1m33 0h1m37 0h1m12 0h2m12 0h1m6 0h1m17 0h2m7 0h1m21 0h2m10 0h2m3 0h2m18 0h1m7 0h1m7 0h2m10 0h1m24 0h1m35 0h1m5 0h1m4 0h1m26 0h1m14 0h1m9 0h1m4 0h2m12 0h2m4 0h2m28 0h1m66 0h1m9 0h2m41 0h1m28 0h2m22 0h1m57 0h2m9 0h2m46 0h1m2 0h2m14 0h2m7 0h1m27 0h2m42 0h1m23 0h1m3 0h1m4 0h1m28 0h1m5 0h2m57 0h1m3 0h1m1 0h1m12 0h1m12 0h2m2 0h1m4 0h1m14 0h1m4 0h1M296 612.5h1m4 0h2m3 0h1m4 0h1m1 0h1m9 0h1m2 0h1m1 0h2m16 0h1m6 0h1m48 0h2m14 0h1m1 0h1m8 0h1m10 0h1m7 0h1m33 0h2m1 0h1m4 0h1m41 0h1m29 0h1m1 0h1m1 0h1m3 0h1m19 0h1m67 0h2m3 0h1m22 0h2m13 0h1m1 0h1m11 0h1m5 0h1m6 0h2m4 0h2m13 0h1m38 0h1m3 0h1m29 0h1m5 0h1m5 0h2m12 0h1m21 0h1m6 0h2m9 0h2m3 0h1m7 0h1m1 0h1m1 0h1m9 0h2m2 0h1m3 0h1m23 0h1m4 0h1m25 0h1m27 0h1m6 0h2m5 0h1m1 0h2m12 0h2m4 0h1m8 0h2m39 0h1m4 0h1m4 0h1m17 0h1m10 0h1m8 0h1m3 0h1m1 0h1m15 0h1m5 0h2m3 0h1m17 0h1m1 0h1m22 0h1m3 0h1m4 0h1m19 0h1m5 0h2m1 0h1m24 0h2m4 0h1m46 0h1m63 0h1m1 0h1M286 637.5h2m3 0h1m7 0h2m4 0h1m6 0h1m16 0h1m1 0h1m4 0h1m7 0h1m2 0h1m22 0h1m12 0h1m19 0h2m3 0h1m9 0h2m35 0h1m13 0h1m8 0h1m6 0h1m5 0h1m3 0h1m11 0h1m15 0h1m1 0h1m3 0h1m23 0h1m12 0h1m1 0h1m5 0h1m1 0h1m3 0h1m5 0h1m2 0h1m1 0h1m10 0h1m10 0h1m27 0h2m22 0h1m22 0h1m15 0h1m5 0h1m12 0h2m13 0h1m2 0h2m6 0h2m14 0h1m13 0h1m9 0h1m27 0h1m31 0h1m29 0h1m7 0h1m14 0h2m9 0h2m16 0h2m41 0h2m1 0h1m16 0h2m2 0h1m6 0h2m13 0h1m9 0h1m14 0h1m10 0h1m8 0h2m2 0h2m10 0h1m14 0h2m9 0h1m2 0h1m9 0h1m10 0h1m1 0h1m2 0h1m4 0h2m11 0h2m18 0h1m2 0h1m8 0h2m15 0h2m16 0h1m17 0h1m8 0h2m1 0h1m11 0h1m14 0h1m3 0h1m7 0h1m2 0h2m11 0h1m6 0h1m1 0h2m7 0h1m10 0h1m4 0h2m3 0h1m8 0h2m14 0h1m4 0h1m3 0h1m6 0h2M359 642.5h1m6 0h1m15 0h1m9 0h1m13 0h1m42 0h2m38 0h1m19 0h2m5 0h2m18 0h1m35 0h1m13 0h1m9 0h1m4 0h1m1 0h1m3 0h1m12 0h1m3 0h2m16 0h1m1 0h1m64 0h1m13 0h1m47 0h1m12 0h1m1 0h1m30 0h1m9 0h2m35 0h1m16 0h1m2 0h1m6 0h1m18 0h1m29 0h1m9 0h2m7 0h1m11 0h1m14 0h1m22 0h1m4 0h1m23 0h1m2 0h1m13 0h1m6 0h1m14 0h1m19 0h1m1 0h1m14 0h2m17 0h2m29 0h1m20 0h1m6 0h1m1 0h1m13 0h2m10 0h1m56 0h1m10 0h1m25 0h2m19 0h1m16 0h2m1 0h2m8 0h1m12 0h2m5 0h2M298 667.5h1m9 0h1m15 0h2m3 0h1m52 0h1m16 0h1m3 0h1m19 0h2m84 0h1m43 0h1m16 0h2m1 0h1m10 0h1m3 0h1m2 0h1m14 0h1m2 0h1m10 0h1m11 0h2m29 0h2m27 0h1m6 0h1m16 0h1m16 0h1m2 0h1m6 0h1m3 0h2m15 0h2m17 0h2m12 0h2m10 0h1m2 0h1m13 0h1m2 0h1m5 0h1m15 0h2m11 0h1m8 0h1m25 0h2m3 0h2m4 0h1m8 0h1m8 0h2m29 0h1m3 0h2m7 0h1m2 0h1m2 0h1m33 0h1m22 0h2m21 0h1m9 0h1m27 0h2m1 0h1m18 0h2m3 0h1m3 0h1m5 0h1m5 0h1m6 0h2m21 0h2m2 0h1m14 0h1m13 0h1m5 0h1m30 0h2m1 0h1m20 0h2m20 0h1m1 0h1m2 0h2m5 0h1m10 0h1m18 0h1m2 0h1m4 0h1m12 0h1m13 0h1m31 0h1M300 672.5h1m15 0h2m27 0h2m12 0h2m7 0h2m4 0h2m27 0h1m2 0h1m6 0h1m3 0h1m3 0h2m4 0h1m45 0h1m1 0h1m28 0h1m25 0h1m4 0h1m2 0h1m9 0h1m16 0h1m72 0h1m1 0h2m21 0h2m8 0h1m11 0h1m14 0h1m1 0h2m23 0h2m1 0h1m8 0h2m15 0h1m21 0h1m10 0h1m4 0h2m27 0h1m4 0h1m14 0h1m10 0h1m54 0h2m37 0h1m22 0h1m6 0h1m14 0h2m4 0h1m38 0h1m7 0h1m3 0h1m9 0h1m4 0h1m2 0h2m1 0h1m6 0h1m34 0h1m16 0h1m4 0h2m31 0h1m7 0h1m2 0h1m31 0h1m7 0h1m8 0h1m19 0h2m21 0h1m2 0h1m11 0h1m12 0h1m7 0h1m41 0h2m4 0h1m8 0h1m18 0h1m10 0h1m5 0h1M291 698.5h1m11 0h1m42 0h1m11 0h1m24 0h1m4 0h1m23 0h1m21 0h1m10 0h1m17 0h1m14 0h1m2 0h1m5 0h1m5 0h1m6 0h1m13 0h2m9 0h1m4 0h1m6 0h2m1 0h1m3 0h1m25 0h1m15 0h2m1 0h2m5 0h1m4 0h2m3 0h1m1 0h1m13 0h1m6 0h1m8 0h1m2 0h1m23 0h1m22 0h1m16 0h1m32 0h2m7 0h1m13 0h1m13 0h1m4 0h1m20 0h1m44 0h2m29 0h2m33 0h1m1 0h1m3 0h2m36 0h1m8 0h2m20 0h1m36 0h1m2 0h1m17 0h2m4 0h1m2 0h1m49 0h1m4 0h1m19 0h2m52 0h1m9 0h2m21 0h1m27 0h1m6 0h2m16 0h1m7 0h2m35 0h1m36 0h2M288 703.5h1m19 0h1m16 0h2m15 0h1m21 0h2m10 0h1m12 0h1m3 0h2m7 0h2m4 0h1m5 0h1m18 0h1m7 0h2m17 0h1m45 0h1m11 0h1m24 0h1m39 0h2m3 0h1m8 0h1m5 0h2m9 0h1m6 0h1m33 0h1m16 0h1m12 0h1m1 0h1m11 0h1m40 0h1m9 0h2m2 0h2m1 0h1m15 0h1m13 0h1m13 0h1m2 0h1m28 0h1m5 0h2m6 0h1m9 0h1m6 0h1m3 0h1m15 0h1m11 0h1m20 0h1m13 0h1m5 0h1m15 0h1m3 0h2m4 0h1m33 0h1m10 0h1m8 0h1m3 0h1m5 0h1m9 0h1m5 0h1m22 0h1m8 0h1m7 0h1m16 0h1m5 0h1m5 0h1m17 0h1m10 0h1m8 0h1m61 0h1m4 0h1m15 0h1m20 0h1m4 0h1m19 0h1m7 0h1m6 0h2m2 0h1m11 0h2m13 0h1m14 0h1m1 0h2m2 0h1m3 0h1m11 0h1m12 0h1m16 0h1m2 0h1M288 728.5h2m10 0h2m31 0h2m4 0h1m11 0h1m53 0h1m6 0h2m30 0h1m12 0h1m11 0h1m19 0h1m7 0h1m28 0h1m1 0h1m18 0h1m6 0h1m1 0h2m9 0h2m14 0h1m9 0h1m12 0h1m9 0h1m46 0h2m24 0h1m1 0h1m12 0h1m13 0h2m21 0h1m5 0h1m23 0h1m32 0h1m11 0h1m30 0h1m19 0h1m5 0h2m37 0h1m13 0h1m32 0h1m7 0h1m37 0h1m12 0h2m39 0h2m27 0h2m30 0h1m20 0h1m23 0h1m10 0h1m16 0h1m5 0h2m20 0h2m32 0h1m14 0h1m1 0h1m8 0h1m2 0h2m6 0h2m44 0h1m6 0h1m34 0h1m9 0h1M289 733.5h1m6 0h1m2 0h1m21 0h1m35 0h1m5 0h2m23 0h2m4 0h2m7 0h1m2 0h1m24 0h1m11 0h2m2 0h1m4 0h1m3 0h2m5 0h1m7 0h1m10 0h2m22 0h2m1 0h1m30 0h1m2 0h2m1 0h1m5 0h1m13 0h2m7 0h1m16 0h1m1 0h1m19 0h1m4 0h1m1 0h2m33 0h1m3 0h2m2 0h2m3 0h1m14 0h1m2 0h2m17 0h1m7 0h1m12 0h1m8 0h2m42 0h1m5 0h1m20 0h1m4 0h1m24 0h2m3 0h1m23 0h1m3 0h2m5 0h1m1 0h1m6 0h1m41 0h1m11 0h1m10 0h1m2 0h1m8 0h1m1 0h1m1 0h1m36 0h1m3 0h1m7 0h1m1 0h1m11 0h1m6 0h1m1 0h2m28 0h1m26 0h2m8 0h2m39 0h1m13 0h1m9 0h1m5 0h2m14 0h1m4 0h1m2 0h2m4 0h2m1 0h1m14 0h2m16 0h1m5 0h1m3 0h1m6 0h2m5 0h1m2 0h1m14 0h1m5 0h2m30 0h2m4 0h1m24 0h1m27 0h1m2 0h1m1 0h1m6 0h2M290 758.5h1m119 0h1m1 0h1m12 0h1m10 0h1m3 0h2m36 0h1m25 0h1m36 0h1m11 0h2m4 0h1m4 0h2m3 0h2m10 0h2m1 0h2m26 0h1m23 0h2m56 0h1m25 0h2m18 0h1m6 0h1m35 0h1m18 0h2m4 0h1m67 0h1m41 0h2m8 0h2m2 0h1m16 0h1m6 0h2m30 0h1m13 0h1m27 0h1m13 0h2m22 0h1m39 0h1m21 0h1m19 0h1m52 0h2m16 0h1m29 0h1m3 0h2m24 0h1m56 0h1m21 0h1M282 763.5h1m29 0h1m4 0h1m3 0h1m48 0h1m9 0h1m22 0h1m18 0h1m26 0h1m9 0h1m7 0h1m11 0h1m8 0h1m1 0h1m46 0h1m2 0h1m21 0h1m1 0h1m8 0h2m6 0h1m16 0h1m4 0h1m3 0h2m1 0h2m5 0h1m11 0h1m26 0h1m16 0h1m1 0h2m8 0h1m15 0h1m7 0h1m29 0h2m30 0h1m1 0h1m20 0h1m12 0h2m6 0h1m25 0h1m2 0h1m2 0h1m4 0h1m9 0h2m2 0h2m8 0h1m5 0h1m11 0h1m38 0h2m2 0h1m6 0h2m16 0h1m4 0h2m15 0h1m10 0h1m6 0h1m8 0h1m4 0h2m9 0h2m34 0h1m8 0h1m1 0h2m3 0h1m14 0h1m1 0h1m12 0h1m8 0h2m9 0h1m6 0h1m25 0h1m77 0h2m25 0h1m5 0h1m19 0h1m37 0h1m7 0h1m12 0h1m11 0h1m15 0h1m8 0h1m2 0h1m8 0h1M311 789.5h2m7 0h1m11 0h2m27 0h1m18 0h1m1 0h1m7 0h2m14 0h2m5 0h1m16 0h1m25 0h1m1 0h1m64 0h2m11 0h1m18 0h1m35 0h1m2 0h1m1 0h2m4 0h1m11 0h1m17 0h1m8 0h1m9 0h1m42 0h1m7 0h1m3 0h1m41 0h1m40 0h2m4 0h2m5 0h1m11 0h2m7 0h1m29 0h1m7 0h1m4 0h1m11 0h1m5 0h1m21 0h1m60 0h2m3 0h1m4 0h1m46 0h1m6 0h1m23 0h1m14 0h2m1 0h1m19 0h1m2 0h1m16 0h1m10 0h1m58 0h1m19 0h1m3 0h1m16 0h1m16 0h1m10 0h1m2 0h1m43 0h2m4 0h1m70 0h1m3 0h1m3 0h1m10 0h1m5 0h1M290 794.5h2m12 0h1m1 0h1m10 0h1m2 0h1m5 0h1m5 0h1m2 0h1m13 0h1m6 0h1m11 0h2m3 0h1m20 0h2m15 0h1m2 0h1m2 0h1m30 0h1m13 0h2m29 0h1m28 0h2m10 0h1m31 0h1m2 0h1m2 0h1m12 0h1m12 0h1m16 0h2m5 0h1m8 0h1m7 0h2m8 0h1m8 0h1m20 0h2m7 0h1m9 0h1m2 0h2m2 0h1m28 0h1m9 0h1m13 0h1m9 0h1m1 0h1m8 0h1m1 0h1m10 0h1m3 0h1m35 0h1m2 0h2m1 0h2m7 0h1m7 0h1m63 0h1m19 0h2m5 0h2m5 0h2m6 0h1m1 0h1m1 0h1m11 0h1m2 0h2m18 0h1m6 0h1m2 0h2m6 0h1m17 0h1m24 0h2m8 0h2m4 0h2m12 0h2m3 0h2m1 0h1m3 0h2m9 0h1m15 0h2m6 0h1m26 0h1m1 0h1m5 0h1m1 0h1m16 0h1m4 0h2m4 0h1m12 0h1m37 0h2m3 0h1m2 0h1m10 0h1m20 0h1m9 0h2m7 0h1m12 0h1m10 0h1m12 0h1m5 0h2m13 0h1m4 0h1m14 0h1m3 0h1M280 819.5h1m3 0h2m2 0h2m5 0h1m1 0h1m7 0h2m13 0h2m8 0h2m17 0h1m9 0h1m7 0h1m11 0h1m14 0h1m9 0h1m4 0h1m2 0h1m10 0h1m8 0h1m17 0h1m22 0h2m3 0h1m4 0h2m17 0h1m32 0h1m7 0h1m19 0h2m1 0h1m4 0h2m2 0h2m2 0h1m7 0h1m14 0h1m28 0h1m4 0h2m1 0h1m48 0h1m24 0h2m36 0h1m3 0h1m5 0h1m10 0h1m2 0h2m14 0h2m1 0h1m6 0h1m2 0h1m17 0h1m8 0h2m8 0h2m3 0h2m1 0h1m7 0h1m22 0h1m2 0h1m13 0h1m5 0h1m9 0h1m1 0h1m1 0h1m3 0h1m10 0h1m8 0h1m21 0h1m29 0h1m9 0h1m5 0h1m1 0h1m28 0h1m6 0h1m6 0h1m9 0h1m7 0h1m1 0h2m3 0h2m1 0h1m1 0h1m8 0h1m10 0h1m7 0h2m27 0h2m4 0h1m9 0h2m7 0h1m2 0h1m17 0h1m7 0h1m2 0h1m9 0h2m6 0h1m2 0h1m1 0h1m22 0h1m5 0h1m3 0h1m2 0h1m2 0h1m1 0h1m13 0h1m2 0h1m20 0h1m2 0h1m9 0h1m5 0h2m2 0h1m3 0h1m16 0h1m13 0h1m5 0h2m1 0h2m1 0h2m4 0h1m23 0h2M310 824.5h1m17 0h2m9 0h1m12 0h2m11 0h1m3 0h2m51 0h1m10 0h2m29 0h1m8 0h1m11 0h1m25 0h1m7 0h1m13 0h1m16 0h1m17 0h2m13 0h1m5 0h1m6 0h1m14 0h1m8 0h1m9 0h2m54 0h1m15 0h2m34 0h1m26 0h1m48 0h1m14 0h1m21 0h1m54 0h1m21 0h1m10 0h1m24 0h1m21 0h1m7 0h1m83 0h1m4 0h1m20 0h1m21 0h1m8 0h1m23 0h1m13 0h1m10 0h1m17 0h1m26 0h2m1 0h1m13 0h1m26 0h2m3 0h1m5 0h2m7 0h2m34 0h1m3 0h1m6 0h1m3 0h1m28 0h1m8 0h1m10 0h2M282 849.5h1m6 0h1m22 0h1m5 0h1m15 0h1m7 0h1m10 0h1m1 0h1m3 0h1m5 0h2m23 0h1m3 0h1m8 0h1m6 0h1m6 0h1m14 0h1m3 0h1m14 0h1m22 0h2m7 0h1m17 0h2m11 0h1m1 0h1m1 0h1m1 0h2m10 0h1m5 0h1m6 0h2m69 0h1m3 0h2m19 0h1m2 0h2m11 0h1m6 0h1m11 0h1m1 0h1m3 0h1m6 0h2m19 0h1m45 0h1m3 0h1m10 0h1m7 0h1m2 0h1m1 0h2m11 0h2m25 0h1m2 0h1m11 0h2m3 0h1m13 0h1m1 0h2m12 0h1m30 0h1m14 0h1m9 0h2m2 0h1m4 0h1m1 0h1m14 0h1m2 0h1m18 0h1m7 0h1m1 0h1m2 0h1m15 0h2m34 0h2m17 0h1m1 0h1m8 0h2m9 0h1m12 0h1m4 0h2m16 0h1m21 0h2m2 0h1m3 0h1m3 0h1m4 0h1m1 0h1m6 0h2m22 0h2m18 0h1m5 0h2m12 0h2m24 0h1m9 0h1m9 0h2m2 0h1m8 0h1m34 0h1m21 0h1m8 0h1m5 0h1m3 0h1m15 0h1m3 0h1m4 0h2M289 854.5h1m2 0h1m30 0h2m36 0h1m8 0h2m11 0h1m43 0h2m9 0h2m1 0h2m15 0h1m38 0h1m20 0h1m17 0h1m3 0h1m6 0h1m43 0h1m7 0h2m19 0h1m43 0h1m24 0h1m3 0h1m1 0h1m2 0h2m17 0h1m37 0h2m34 0h1m12 0h1m22 0h1m6 0h1m26 0h2m26 0h2m29 0h1m37 0h1m20 0h2m14 0h1m28 0h1m8 0h1m21 0h1m5 0h2m18 0h1m1 0h1m5 0h1m8 0h1m6 0h1m55 0h1m9 0h2m17 0h2m11 0h2m4 0h1m19 0h1m14 0h1m7 0h1m4 0h1m6 0h1m33 0h2m2 0h1m20 0h1m56 0h1m3 0h1m10 0h1M280 880.5h2m3 0h1m1 0h1m9 0h1m21 0h1m10 0h1m10 0h1m12 0h1m33 0h1m9 0h1m8 0h1m40 0h1m39 0h1m2 0h1m21 0h1m10 0h1m1 0h1m1 0h2m6 0h1m7 0h1m6 0h1m32 0h2m7 0h1m31 0h1m2 0h1m9 0h2m10 0h1m2 0h1m9 0h1m9 0h2m15 0h2m5 0h1m20 0h1m31 0h2m51 0h1m6 0h1m1 0h1m2 0h1m19 0h1m10 0h2m4 0h1m35 0h1m47 0h1m1 0h2m21 0h1m24 0h1m8 0h1m27 0h1m5 0h2m1 0h1m1 0h1m7 0h1m8 0h1m7 0h1m12 0h1m33 0h1m3 0h1m5 0h1m5 0h1m6 0h1m3 0h2m20 0h1m22 0h1m2 0h2m36 0h1m5 0h1m22 0h1m5 0h1m12 0h1m1 0h1m9 0h1m8 0h2m2 0h2m57 0h1m4 0h1m3 0h1M280 885.5h1m10 0h1m1 0h2m4 0h1m21 0h1m14 0h1m10 0h1m22 0h1m1 0h2m7 0h1m13 0h1m1 0h1m2 0h2m7 0h1m2 0h1m8 0h2m14 0h2m8 0h1m28 0h1m4 0h1m8 0h1m6 0h1m5 0h1m2 0h1m6 0h1m1 0h1m4 0h1m1 0h1m36 0h1m13 0h1m5 0h2m6 0h1m12 0h2m4 0h1m3 0h1m1 0h1m20 0h1m8 0h1m8 0h1m28 0h1m12 0h1m6 0h1m24 0h1m2 0h1m3 0h2m27 0h2m7 0h1m1 0h1m9 0h1m6 0h1m2 0h1m25 0h1m32 0h1m9 0h2m3 0h1m6 0h1m4 0h2m9 0h1m13 0h2m10 0h1m36 0h1m7 0h2m2 0h1m5 0h1m1 0h1m9 0h2m3 0h1m18 0h1m4 0h1m6 0h2m6 0h1m26 0h2m7 0h1m5 0h2m13 0h2m12 0h1m4 0h1m5 0h1m3 0h2m1 0h1m15 0h1m13 0h2m1 0h1m2 0h2m5 0h1m7 0h1m2 0h1m10 0h2m17 0h2m3 0h2m4 0h2m5 0h1m8 0h1m2 0h1m12 0h1m32 0h1m6 0h1m10 0h1m3 0h2m8 0h1m11 0h1m17 0h1m2 0h1m3 0h1m21 0h1m1 0h1m2 0h1m4 0h1m11 0h2m4 0h2m1 0h1M291 910.5h2m8 0h1m57 0h2m34 0h1m16 0h2m22 0h2m40 0h1m85 0h2m17 0h1m85 0h2m1 0h1m74 0h1m5 0h1m54 0h1m114 0h1m36 0h1m49 0h1m18 0h1m76 0h1m15 0h1m6 0h2m84 0h1M277 914.5h1m1 0h1m2 0h2m4 0h1m4 0h1m5 0h1m4 0h1m1 0h1m1 0h1m2 0h2m2 0h1m2 0h1m3 0h1m7 0h1m4 0h1m2 0h1m1 0h1m2 0h1m5 0h1m1 0h1m5 0h1m7 0h1m2 0h2m2 0h1m1 0h1m1 0h2m7 0h1m1 0h1m2 0h1m7 0h1m1 0h1m4 0h1m3 0h1m1 0h1m4 0h2m4 0h2m1 0h1m7 0h2m3 0h1m24 0h1m2 0h1m4 0h1m1 0h2m7 0h2m1 0h2m3 0h1m12 0h1m2 0h1m6 0h1m7 0h2m1 0h2m2 0h1m13 0h1m1 0h1m2 0h2m2 0h1m2 0h1m9 0h2m2 0h1m2 0h1m4 0h1m5 0h2m3 0h2m2 0h1m1 0h2m1 0h1m7 0h1m2 0h1m12 0h1m2 0h2m8 0h1m3 0h1m1 0h1m2 0h2m3 0h2m6 0h1m11 0h1m6 0h2m12 0h2m7 0h1m1 0h2m8 0h2m3 0h2m2 0h1m2 0h1m8 0h1m2 0h1m10 0h1m2 0h1m1 0h1m1 0h1m1 0h1m4 0h1m5 0h1m3 0h1m2 0h1m5 0h2m1 0h1m1 0h2m3 0h1m1 0h1m1 0h1m4 0h1m6 0h1m2 0h1m10 0h1m2 0h1m1 0h1m1 0h1m5 0h2m2 0h1m4 0h1m2 0h1m3 0h1m7 0h1m7 0h1m1 0h1m1 0h1m2 0h1m2 0h1m2 0h2m2 0h2m6 0h1m5 0h2m3 0h2m7 0h1m1 0h1m2 0h1m6 0h1m3 0h1m1 0h1m1 0h1m1 0h2m8 0h2m4 0h1m4 0h1m3 0h2m2 0h1m1 0h1m4 0h1m8 0h1m6 0h1m2 0h1m1 0h2m3 0h2m2 0h1m5 0h1m2 0h1m7 0h2m1 0h1m3 0h1m1 0h1m4 0h2m5 0h1m1 0h1m1 0h1m2 0h1m8 0h1m2 0h1m2 0h2m2 0h1m8 0h1m2 0h2m2 0h2m2 0h1m3 0h2m5 0h1m18 0h1m5 0h2m2 0h1m1 0h1m1 0h1m6 0h2m3 0h1m2 0h1m3 0h1m1 0h1m2 0h1m2 0h1m1 0h1m1 0h1m1 0h1m3 0h2m1 0h1m4 0h1m2 0h1m5 0h2m3 0h1m3 0h1m1 0h2m2 0h1m2 0h2m3 0h1m3 0h1m7 0h1m3 0h1m4 0h1m2 0h1m3 0h1m2 0h2m1 0h1m1 0h1m1 0h1m2 0h1m1 0h1m2 0h1m1 0h1m9 0h1m2 0h1m3 0h2m3 0h1m9 0h2m1 0h2m2 0h1m1 0h1m1 0h2m9 0h1m3 0h1m1 0h2m3 0h1m3 0h2m1 0h1m2 0h1m1 0h1m1 0h1m2 0h1m5 0h1m4 0h1"/><path stroke="#0ff" fill="none" d="M408.5 213V217M409.5 212V218M410.5 212V218M411.5 213V217M412.5 212V218M413.5 212V218M414.5 212V218M415.5 212V218M416.5 212V218M417.5 212V218M418.5 212V218M419.5 213V217M417.5 215V220M304.5 243V248M305.5 242V249M306.5 242V248M307.5 242V249M308.5 242V249M309.5 242V248M310.5 243V248M311.5 242V249M312.5 242V249M313.5 243V248M1188.5 244V248M1189.5 244V248M1190.5 243V249M1191.5 244V249M1192.5 243V249M1193.5 243V249M1194.5 243V249M1195.5 244V248M1166.5 299V318M550.5 320V347M1339.5 326V348M1262.5 335V340M1264.5 335V341M1040.5 355V381M311.5 421V431M633.5 425V431M636.5 426V431M637.5 425V432M639.5 425V432M1339.5 455V461M1340.5 454V460M1341.5 455V461M1342.5 456V462M1345.5 454V462M1347.5 454V460M492.5 486V492M494.5 486V490M496.5 486V491M1356.5 476V499M1112.5 501V529M1210.5 537V560M491.5 567V595M492.5 564V595M493.5 565V588M494.5 574V585M495.5 572V587M496.5 573V586M497.5 576V583M498.5 576V583M499.5 576V583M500.5 575V584M501.5 575V583M502.5 574V583M503.5 574V583M504.5 575V583M505.5 574V584M506.5 574V583M507.5 574V583M508.5 576V583M509.5 576V582M510.5 576V584M511.5 575V583M512.5 575V583M513.5 576V582M514.5 576V583M515.5 575V583M516.5 575V583M517.5 576V583M518.5 576V583M519.5 576V582M520.5 576V583M521.5 576V583M522.5 575V583M523.5 576V582M524.5 576V582M525.5 576V582M526.5 576V583M527.5 576V582M528.5 576V583M529.5 577V582M530.5 576V583M531.5 576V582M532.5 576V581M533.5 576V582M534.5 576V582M535.5 576V582M536.5 577V582M537.5 576V583M538.5 576V582M539.5 576V582M540.5 576V583M541.5 577V581M542.5 576V583M543.5 576V582M544.5 576V582M545.5 576V582M546.5 576V583M547.5 576V582M548.5 577V582M549.5 576V581M550.5 576V582M551.5 576V583M552.5 577V582M553.5 576V583M554.5 576V582M555.5 576V582M556.5 576V583M557.5 576V582M558.5 577V583M559.5 576V582M560.5 577V581M1390.5 577V582M1393.5 576V584M1394.5 577V584M1395.5 575V584M1396.5 575V584M1397.5 577V582M1398.5 576V583M1399.5 577V583M1400.5 576V584M703.5 597V622M948.5 607V615M949.5 608V615M950.5 607V613M951.5 608V615M953.5 607V614M954.5 608V613M419.5 659V685M1248.5 660V682M1299.5 667V672M1300.5 667V674M1301.5 668V672M1303.5 668V672M585.5 689V716M982.5 687V712M1149.5 699V705M1150.5 698V704M1154.5 699V705M1155.5 698V705M1157.5 698V705M654.5 699V704M655.5 699V703M721.5 719V745M876.5 718V744M553.5 747V775M1056.5 757V767M1057.5 759V766M1059.5 757V765M1060.5 759V766M1061.5 759V764M1059.5 756V767M289.5 813V834M716.5 809V834M779.5 819V825M780.5 819V826M781.5 820V825M782.5 820V824M552.5 841V864M802.5 874V890M801.5 877V886M802.5 881V885M743.5 881V887M745.5 881V887M746.5 881V885M747.5 880V885M748.5 881V885M751.5 881V887M374.5 902V922M699.5 898V926"/>
</svg>
<div class="hdr" style="top:106px">Département de géologie et de génie géologique</div>
<div class="hdr" style="top:125px">Faculté des sciences et de génie</div>
<div class="hdr" style="top:144px">Université Laval</div>
<div style="position:absolute;left:539px;width:600px;top:123px;text-align:center;font-size:21.33px;letter-spacing:0.12px;line-height:25px;color:#000;white-space:nowrap;">Séismographe QCQ (CGC/GSC)</div>
<div style="position:absolute;left:1405px;top:176px;font-size:18px;line-height:21px;color:#ff0000;">UTC</div>
<div style="position:absolute;left:640px;width:400px;top:985px;text-align:center;font-size:18px;letter-spacing:0.2px;line-height:21px;color:#000;">Minutes écoulées</div>
<div class="t13" style="left:332px;top:166px">02</div>
<div class="t13" style="left:332px;top:948px">02</div>
<div class="t13" style="left:407px;top:166px">04</div>
<div class="t13" style="left:407px;top:948px">04</div>
<div class="t13" style="left:482px;top:166px">06</div>
<div class="t13" style="left:482px;top:948px">06</div>
<div class="t13" style="left:557px;top:166px">08</div>
<div class="t13" style="left:557px;top:948px">08</div>
<div class="t13" style="left:632px;top:166px">10</div>
<div class="t13" style="left:632px;top:948px">10</div>
<div class="t13" style="left:707px;top:166px">12</div>
<div class="t13" style="left:707px;top:948px">12</div>
<div class="t13" style="left:782px;top:166px">14</div>
<div class="t13" style="left:782px;top:948px">14</div>
<div class="t13" style="left:856px;top:166px">16</div>
<div class="t13" style="left:856px;top:948px">16</div>
<div class="t13" style="left:931px;top:166px">18</div>
<div class="t13" style="left:931px;top:948px">18</div>
<div class="t13" style="left:1006px;top:166px">20</div>
<div class="t13" style="left:1006px;top:948px">20</div>
<div class="t13" style="left:1081px;top:166px">22</div>
<div class="t13" style="left:1081px;top:948px">22</div>
<div class="t13" style="left:1156px;top:166px">24</div>
<div class="t13" style="left:1156px;top:948px">24</div>
<div class="t13" style="left:1231px;top:166px">26</div>
<div class="t13" style="left:1231px;top:948px">26</div>
<div class="t13" style="left:1306px;top:166px">28</div>
<div class="t13" style="left:1306px;top:948px">28</div>
<div class="r13" style="left:1407px;top:208px">12:30</div>
<div class="r13" style="left:1407px;top:239px">13:00</div>
<div class="r13" style="left:1407px;top:269px">13:30</div>
<div class="r13" style="left:1407px;top:299px">14:00</div>
<div class="r13" style="left:1407px;top:330px">14:30</div>
<div class="r13" style="left:1407px;top:360px">15:00</div>
<div class="r13" style="left:1407px;top:390px">15:30</div>
<div class="r13" style="left:1407px;top:421px">16:00</div>
<div class="r13" style="left:1407px;top:451px">16:30</div>
<div class="r13" style="left:1407px;top:481px">17:00</div>
<div class="r13" style="left:1407px;top:512px">17:30</div>
<div class="r13" style="left:1407px;top:542px">18:00</div>
<div class="r13" style="left:1407px;top:572px">18:30</div>
<div class="r13" style="left:1407px;top:603px">19:00</div>
<div class="r13" style="left:1407px;top:633px">19:30</div>
<div class="r13" style="left:1407px;top:663px">20:00</div>
<div class="r13" style="left:1407px;top:694px">20:30</div>
<div class="r13" style="left:1407px;top:724px">21:00</div>
<div class="r13" style="left:1407px;top:754px">21:30</div>
<div class="r13" style="left:1407px;top:785px">22:00</div>
<div class="r13" style="left:1407px;top:815px">22:30</div>
<div class="r13" style="left:1407px;top:845px">23:00</div>
<div class="r13" style="left:1407px;top:876px">23:30</div>
<div class="r13" style="left:1407px;top:906px">24:00</div>
<!-- logo -->
<svg style="left:1299px;top:113px" width="36" height="44" viewBox="0 0 36 44">
  <defs>
    <g id="fl"><path d="M-2.3 -0.6a1.2 1.2 0 0 1 1.3-1.6a1.1 1.1 0 0 1 2 0a1.2 1.2 0 0 1 1.3 1.6q-0.3 1.3-1.5 1.6v1.8h-1.6v-1.8q-1.2-0.3-1.5-1.6z" fill="#e9e9e9" stroke="#b9b9b9" stroke-width="0.4"/></g>
    <g id="dr"><path d="M-2.6 1.4q0-3.6 2.6-3.6t2.6 3.6z" fill="#1f8fdc"/></g>
  </defs>
  <path d="M1.5 1.5h32v33c0 2-1.5 3.5-3.5 3.5h-8.5l-4 4-4-4H5c-2 0-3.5-1.5-3.5-3.5z" fill="#e21d24" stroke="#8f1f1f" stroke-width="1"/>
  <path d="M14.3 1.5h6v36.5l-3 3.3-3-3.3z" fill="#f6c10b"/>
  <rect x="2" y="16.6" width="31" height="6.1" fill="#f6c10b"/>
  <use href="#dr" x="17.3" y="9.4"/><use href="#dr" x="17.3" y="19.9"/><use href="#dr" x="17.3" y="30.4"/>
  <use href="#dr" x="8.1" y="19.9"/><use href="#dr" x="26.5" y="19.9"/>
  <use href="#fl" x="5.2" y="5.8"/><use href="#fl" x="5.2" y="12.7"/><use href="#fl" x="5.2" y="26.5"/><use href="#fl" x="5.2" y="33.3"/><use href="#fl" x="10.7" y="5.8"/><use href="#fl" x="10.7" y="12.7"/><use href="#fl" x="10.7" y="26.5"/><use href="#fl" x="10.7" y="33.3"/><use href="#fl" x="23.8" y="5.8"/><use href="#fl" x="23.8" y="12.7"/><use href="#fl" x="23.8" y="26.5"/><use href="#fl" x="23.8" y="33.3"/><use href="#fl" x="29.4" y="5.8"/><use href="#fl" x="29.4" y="12.7"/><use href="#fl" x="29.4" y="26.5"/><use href="#fl" x="29.4" y="33.3"/>
</svg>
<div style="position:absolute;left:1339px;top:118px;font-size:10px;line-height:12px;color:#2a2a2a;letter-spacing:0.35px;white-space:nowrap;">UNIVERSITÉ</div>
<div style="position:absolute;left:1337px;top:127px;font-size:23px;line-height:25px;color:#151515;letter-spacing:-1.1px;white-space:nowrap;">LAVAL</div>
</body></html>
